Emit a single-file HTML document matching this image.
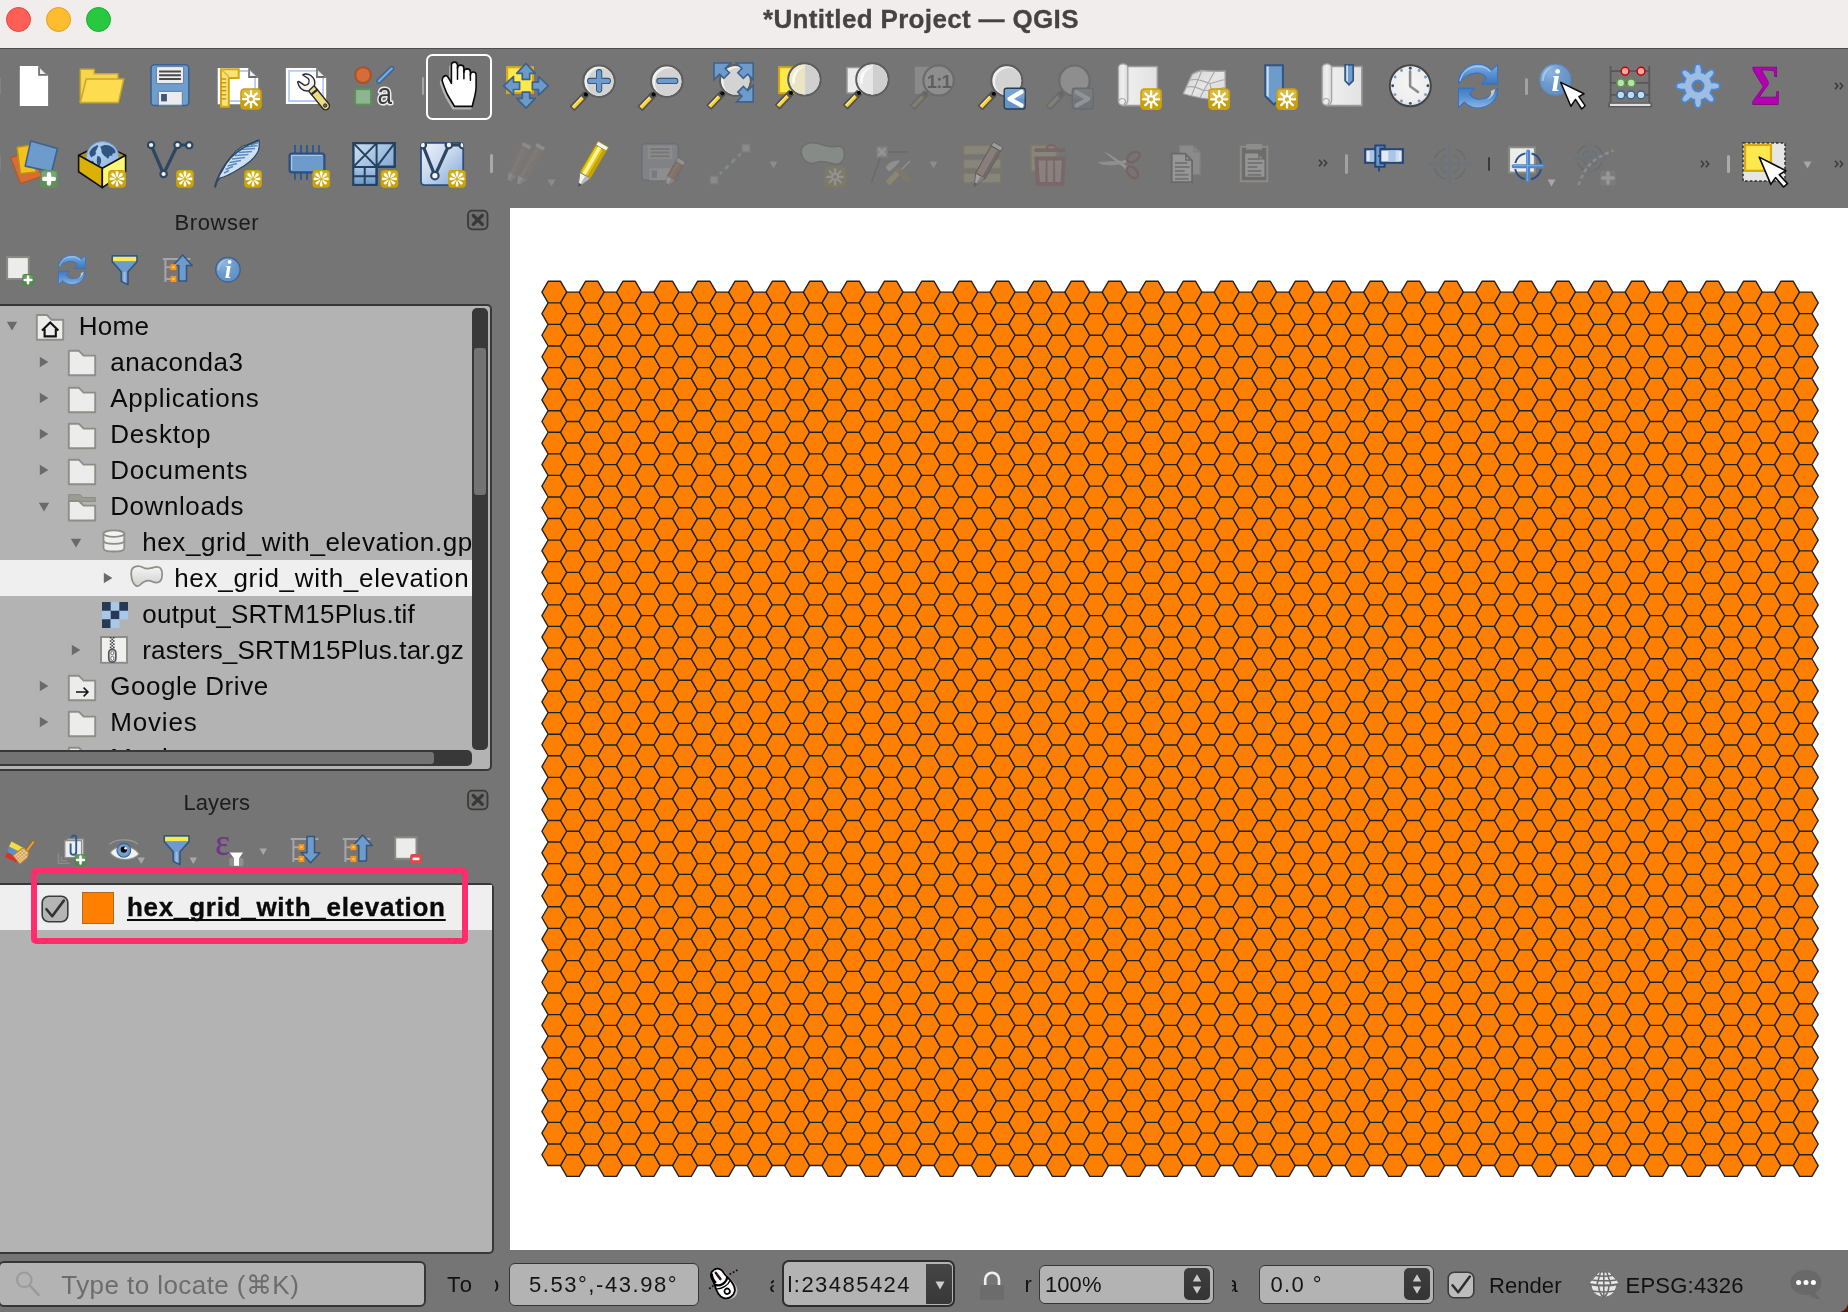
<!DOCTYPE html>
<html lang="en"><head><meta charset="utf-8"><title>*Untitled Project — QGIS</title>
<style>
html,body{margin:0;padding:0;background:#757575;}
body{width:1848px;height:1312px;overflow:hidden;font-family:"Liberation Sans",sans-serif;}
#app{position:relative;width:1848px;height:1312px;overflow:hidden;background:#757575;will-change:transform;}
#titlebar{position:absolute;left:0;top:0;width:1848px;height:48px;background:#f0edec;border-bottom:1px solid #4d4d4d;box-sizing:content-box;}
.tl{position:absolute;top:7px;width:23px;height:23px;border-radius:50%;border:1px solid;box-sizing:content-box;}
.t{position:absolute;white-space:pre;font-family:"Liberation Sans",sans-serif;}
.i{position:absolute;overflow:visible;}
.sep{position:absolute;width:3px;border-radius:2px;background:#9a9a9a;}

</style></head>
<body>
<div id="app">
<div id="titlebar">
<i class="tl" style="left:6px;background:#ff5f57;border-color:#e2463f"></i>
<i class="tl" style="left:46px;background:#febc2e;border-color:#dfa023"></i>
<i class="tl" style="left:86px;background:#28c840;border-color:#1dad2b"></i>
</div>
<span class="t" style="left:763.00px;top:5.69px;font-size:26px;line-height:26px;font-weight:700;color:#454343;letter-spacing:0.338px;-webkit-text-stroke:0.3px #454343;">*Untitled Project — QGIS</span>
<div style="position:absolute;left:0px;top:78px;width:1px;height:16px;background:#818181"></div>
<div style="position:absolute;left:0px;top:155px;width:1px;height:16px;background:#818181"></div>
<svg class="i" style="left:10px;top:62px;" width="48" height="48" viewBox="0 0 48 48"><path d="M9.800,3.900 H28.200 L38.100,13.800 V44 H9.800z" fill="#fff"/><path d="M28.200,3.900 V13.800 H38.100z" fill="#6c6c6c"/><path d="M29.900,6.400 V11.900 H35.700z" fill="#f0f0f0"/></svg>
<svg class="i" style="left:77px;top:62px;" width="48" height="48" viewBox="0 0 48 48"><path d="M3.300,40.600 V7.300 H17.200 V11.800 H41 V40.600z" fill="#f7d64c" stroke="#c7a730" stroke-width="1.500" stroke-linejoin="round"/><path d="M9.200,17 H46.800 L41.400,40.600 H3.300z" fill="#fddc50" stroke="#c7a730" stroke-width="1.500" stroke-linejoin="round"/></svg>
<svg class="i" style="left:146px;top:62px;" width="48" height="48" viewBox="0 0 48 48"><rect x="5" y="2.700" width="37.800" height="40.800" rx="3.600" fill="#6f9dcc" stroke="#3c6190" stroke-width="1.600"/><rect x="10.400" y="4.600" width="27.200" height="17" rx="1.600" fill="#ededed" stroke="#5f7fa6" stroke-width="1"/><path d="M13.100,9.400H34.900 M13.100,13.200H34.900 M13.100,17H34.900" stroke="#4a4a4a" stroke-width="2"/><rect x="12.300" y="29.400" width="24" height="13.800" rx="1" fill="#ececec" stroke="#5f7fa6" stroke-width="1"/><rect x="15.100" y="32" width="5.800" height="7.400" fill="#3c587d"/></svg>
<svg class="i" style="left:215px;top:62px;" width="48" height="48" viewBox="0 0 48 48"><path d="M2.700,5.900 H33.200 L43.200,15.900 V42.300 H2.700z" fill="#fff"/><path d="M33.200,5.900 V15.900 H43.200z" fill="#6c6c6c"/><path d="M34.900,8.400 V13.900 H40.700z" fill="#f0f0f0"/><path d="M33.200,9 H14 M40.100,15.900 V39 H14" fill="none" stroke="#b9cbf5" stroke-width="1.800"/><path d="M6,7.200 H23.700 V16 H13.800 V44.700 H6z" fill="#fbe27c" stroke="#d3a912" stroke-width="2" stroke-linejoin="miter"/><path d="M6.500,7.500 L13.800,14.600" stroke="#e0ba30" stroke-width="1.600"/><path d="M6,17h5.200 M6,20.800h5.200 M6,24.700h5.200 M6,28.600h5.200 M6,32.800h5.200 M6,36.800h5.200" stroke="#c59b10" stroke-width="1.600"/><rect x="25.2" y="26.2" width="21.6" height="21.6" rx="4.200" fill="#c6a008"/><rect x="26.8" y="27.8" width="18.4" height="9.072" rx="3" fill="#e4cf72" opacity=".55"/><path d="M36.00,29.10 L36.00,45.30 M41.73,31.47 L30.27,42.93 M44.10,37.20 L27.90,37.20 M41.73,42.93 L30.27,31.47 " stroke="#fff" stroke-width="2.300" stroke-linecap="round" fill="none"/><circle cx="36" cy="37.2" r="4.100" fill="#fff"/><circle cx="36" cy="37.2" r="2.100" fill="#d3b12c"/></svg>
<svg class="i" style="left:283px;top:62px;" width="48" height="48" viewBox="0 0 48 48"><path d="M2.900,5.900 H33.100 L43.200,15.900 V42.100 H2.900z" fill="#fff"/><path d="M33.100,5.900 V15.900 H43.200z" fill="#6c6c6c"/><path d="M34.800,8.400 V13.900 H40.700z" fill="#f0f0f0"/><path d="M33.100,8.900 H6 V39 H40.100 V15.900" fill="none" stroke="#b9cbf5" stroke-width="1.800"/><path d="M29,27.200 L42.600,43.900" stroke="#2a2a2a" stroke-width="9" stroke-linecap="round"/><path d="M29,27.200 L42.600,43.900" stroke="#eedc82" stroke-width="6.200" stroke-linecap="round"/><path d="M28.200,32.600 L34.600,27.400" stroke="#2a2a2a" stroke-width="2"/><circle cx="42.200" cy="43.500" r="1.700" fill="#6a6a6a" stroke="#2a2a2a" stroke-width="1"/><path d="M19.800,12.800 C21,11.900 25,11.400 27.800,13.500 C30.200,15.300 31.800,18 31.800,20.500 C31.800,22 31.600,23 31.100,23.800 L25.600,28.900 C22.600,29.400 20,28.400 18,26.400 C16.200,24.600 15,22.400 14.600,19.800 L15.700,19.400 L21.600,23.400 C23.400,23.400 25,22.600 25.800,21 C26.500,19.400 26.200,17.600 25.200,16.500 L20.500,13.500z" fill="#f2f3f3" stroke="#2a2a2a" stroke-width="1.400" stroke-linejoin="round"/></svg>
<svg class="i" style="left:350px;top:62px;" width="48" height="48" viewBox="0 0 48 48"><circle cx="13.050" cy="13.100" r="7.900" fill="#d46d3a" stroke="#a8522a" stroke-width="2"/><path d="M28.900,19.200 L41.700,6.500" stroke="#3f6595" stroke-width="5.400" stroke-linecap="round"/><path d="M28.900,19.200 L41.700,6.500" stroke="#7aa7da" stroke-width="2.400" stroke-linecap="round"/><rect x="5.100" y="27.100" width="15.900" height="15.500" fill="#8db592" stroke="#5d9158" stroke-width="2"/><text x="27.400" y="42" font-family="Liberation Sans,sans-serif" font-size="29" fill="#3a3a3a" stroke="#ececec" stroke-width="3.200" stroke-linejoin="round" paint-order="stroke" textLength="14.500" lengthAdjust="spacingAndGlyphs">a</text></svg>
<div style="position:absolute;left:421.7px;top:77px;width:2.6px;height:18px;background:#a6a6a6;border-radius:2px"></div>
<div style="position:absolute;left:426px;top:53.6px;width:66px;height:66.4px;box-sizing:border-box;border:2.2px solid #fdfdfd;border-radius:6.5px;background:#737373"></div>
<svg class="i" style="left:435px;top:62px;" width="48" height="48" viewBox="0 0 48 48"><path d="M16.400,21.300 V3.200 a3.050,3.050 0 0 1 6.100,0 V6.350 a3.200,3.200 0 0 1 6.400,0 V10.150 a3.250,3.250 0 0 1 6.500,0 V12.850 a2.850,2.850 0 0 1 5.700,0 V24.400 C41.100,32 38.500,38 37.300,44.400 H19.500 C17,40 15,37 13,33.500 C10.500,29 9,24 7.400,19.600 C6.400,16.800 8.400,13.600 11,13.600 C13,13.600 14.600,18 16.400,21.300z" transform="translate(-1.600,2.300)" fill="#b4b4b4" stroke="#b4b4b4" stroke-width="1.400"/><path d="M16.400,21.300 V3.200 a3.050,3.050 0 0 1 6.100,0 V6.350 a3.200,3.200 0 0 1 6.400,0 V10.150 a3.250,3.250 0 0 1 6.500,0 V12.850 a2.850,2.850 0 0 1 5.700,0 V24.400 C41.100,32 38.500,38 37.300,44.400 H19.500 C17,40 15,37 13,33.500 C10.500,29 9,24 7.400,19.600 C6.400,16.800 8.400,13.600 11,13.600 C13,13.600 14.600,18 16.400,21.300z" fill="#fff" stroke="#0a0a0a" stroke-width="1.600" stroke-linejoin="round"/><path d="M22.500,5.400 V17.200 M28.900,8.500 V16.800 M35.400,12.200 V18.300" stroke="#0a0a0a" stroke-width="1.500" stroke-linecap="round"/></svg>
<svg class="i" style="left:502px;top:62px;" width="48" height="48" viewBox="0 0 48 48"><rect x="5.100" y="5.200" width="25.800" height="25.600" fill="#fde84e" stroke="#d9a90f" stroke-width="2.200"/><path transform="rotate(0 24 23.800)" d="M24,1.400 L33.300,11.300 H27.700 V17.400 H20.300 V11.300 H14.700z" fill="#6d9bc9" stroke="#3f628a" stroke-width="1.700" stroke-linejoin="round"/><path transform="rotate(90 24 23.800)" d="M24,1.400 L33.300,11.300 H27.700 V17.400 H20.300 V11.300 H14.700z" fill="#6d9bc9" stroke="#3f628a" stroke-width="1.700" stroke-linejoin="round"/><path transform="rotate(180 24 23.800)" d="M24,1.400 L33.300,11.300 H27.700 V17.400 H20.300 V11.300 H14.700z" fill="#6d9bc9" stroke="#3f628a" stroke-width="1.700" stroke-linejoin="round"/><path transform="rotate(270 24 23.800)" d="M24,1.400 L33.300,11.300 H27.700 V17.400 H20.300 V11.300 H14.700z" fill="#6d9bc9" stroke="#3f628a" stroke-width="1.700" stroke-linejoin="round"/></svg>
<svg class="i" style="left:571px;top:62px;" width="48" height="48" viewBox="0 0 48 48"><path d="M15.52,31.68 L1.02,46.78" stroke="#525252" stroke-width="7" stroke-linecap="butt"/><path d="M11.62,35.68 L2.12,45.68" stroke="#fdd22e" stroke-width="3.500" stroke-linecap="butt"/><path d="M10.82,34.88 L1.32,44.88" stroke="#ffeb99" stroke-width="1.100" stroke-linecap="butt"/><circle cx="14.92" cy="32.38" r="2.100" fill="#050505"/><circle cx="28" cy="19.2" r="15.7" fill="#d3d3d3" stroke="#5e5e5e" stroke-width="2.200"/><clipPath id="gzic"><circle cx="28" cy="19.2" r="14.6"/></clipPath><g clip-path="url(#gzic)"><circle cx="28" cy="19.2" r="14.7" fill="#f0f0f0"/><circle cx="30.5" cy="20.7" r="14.5" fill="#d3d3d3"/></g><path d="M19.200,18.950 H36.800 M28.100,10.200 V27.600" stroke="#27466e" stroke-width="6.200" stroke-linecap="round"/><path d="M19.200,18.950 H36.800 M28.100,10.200 V27.600" stroke="#6d9bcb" stroke-width="4.600" stroke-linecap="round"/></svg>
<svg class="i" style="left:639px;top:62px;" width="48" height="48" viewBox="0 0 48 48"><path d="M15.32,31.68 L0.82,46.78" stroke="#525252" stroke-width="7" stroke-linecap="butt"/><path d="M11.42,35.68 L1.92,45.68" stroke="#fdd22e" stroke-width="3.500" stroke-linecap="butt"/><path d="M10.62,34.88 L1.12,44.88" stroke="#ffeb99" stroke-width="1.100" stroke-linecap="butt"/><circle cx="14.72" cy="32.38" r="2.100" fill="#050505"/><circle cx="27.8" cy="19.2" r="15.7" fill="#d3d3d3" stroke="#5e5e5e" stroke-width="2.200"/><clipPath id="gzoc"><circle cx="27.8" cy="19.2" r="14.6"/></clipPath><g clip-path="url(#gzoc)"><circle cx="27.8" cy="19.2" r="14.7" fill="#f0f0f0"/><circle cx="30.3" cy="20.7" r="14.5" fill="#d3d3d3"/></g><path d="M20.400,18.950 H36.200" stroke="#27466e" stroke-width="6.200" stroke-linecap="round"/><path d="M20.400,18.950 H36.200" stroke="#6d9bcb" stroke-width="4.600" stroke-linecap="round"/></svg>
<svg class="i" style="left:707px;top:62px;" width="48" height="48" viewBox="0 0 48 48"><path d="M16.11,30.59 L1.61,45.69" stroke="#525252" stroke-width="7" stroke-linecap="butt"/><path d="M12.21,34.59 L2.71,44.59" stroke="#fdd22e" stroke-width="3.500" stroke-linecap="butt"/><path d="M11.41,33.79 L1.91,43.79" stroke="#ffeb99" stroke-width="1.100" stroke-linecap="butt"/><circle cx="15.51" cy="31.29" r="2.100" fill="#050505"/><circle cx="28.3" cy="18.4" r="15.3" fill="#d3d3d3" stroke="#5e5e5e" stroke-width="2.200"/><clipPath id="gzfc"><circle cx="28.3" cy="18.4" r="14.2"/></clipPath><g clip-path="url(#gzfc)"><circle cx="28.3" cy="18.4" r="14.3" fill="#f0f0f0"/><circle cx="30.8" cy="19.9" r="14.1" fill="#d3d3d3"/></g><path transform="translate(7,1) rotate(0)" d="M0,0 H16.800 L11.200,5.600 L15.400,9.800 L9.800,15.400 L5.600,11.200 L0,16.800z" fill="#6d9bcb" stroke="#3f628a" stroke-width="1.600" stroke-linejoin="miter"/><path transform="translate(46.2,1) rotate(90)" d="M0,0 H16.800 L11.200,5.600 L15.400,9.800 L9.800,15.400 L5.600,11.200 L0,16.800z" fill="#6d9bcb" stroke="#3f628a" stroke-width="1.600" stroke-linejoin="miter"/><path transform="translate(46.2,39.9) rotate(180)" d="M0,0 H16.800 L11.200,5.600 L15.400,9.800 L9.800,15.400 L5.600,11.200 L0,16.800z" fill="#6d9bcb" stroke="#3f628a" stroke-width="1.600" stroke-linejoin="miter"/></svg>
<svg class="i" style="left:775px;top:62px;" width="48" height="48" viewBox="0 0 48 48"><rect x="4.100" y="5.250" width="25" height="25.900" fill="#fde84e" stroke="#d4a90a" stroke-width="2"/><path d="M16.64,30.16 L2.14,45.26" stroke="#525252" stroke-width="7" stroke-linecap="butt"/><path d="M12.74,34.16 L3.24,44.16" stroke="#fdd22e" stroke-width="3.500" stroke-linecap="butt"/><path d="M11.94,33.36 L2.44,43.36" stroke="#ffeb99" stroke-width="1.100" stroke-linecap="butt"/><circle cx="16.04" cy="30.86" r="2.100" fill="#050505"/><circle cx="29.4" cy="17.4" r="16.1" fill="#d3d3d3" stroke="#5e5e5e" stroke-width="2.200"/><clipPath id="gzsc"><circle cx="29.4" cy="17.4" r="15"/></clipPath><g clip-path="url(#gzsc)"><circle cx="29.4" cy="17.4" r="15.1" fill="#f0f0f0"/><circle cx="31.9" cy="18.9" r="14.9" fill="#d3d3d3"/></g><clipPath id="czs"><circle cx="29.400" cy="17.400" r="15"/></clipPath><g clip-path="url(#czs)"><rect x="10" y="0" width="20.300" height="36" fill="#efe9bf" opacity=".8"/><rect x="30.300" y="0" width="20" height="36" fill="#cfcfcf" opacity=".85"/></g><path d="M17.600,22 C15.600,13 21,6 29.500,4.800 C23,7.500 19.500,13 19.800,21.500z" fill="#fff" opacity=".85"/></svg>
<svg class="i" style="left:843px;top:62px;" width="48" height="48" viewBox="0 0 48 48"><rect x="4" y="5.550" width="25" height="25.450" fill="#ececec" stroke="#9a9a94" stroke-width="1.500"/><path d="M16.64,30.16 L2.14,45.26" stroke="#525252" stroke-width="7" stroke-linecap="butt"/><path d="M12.74,34.16 L3.24,44.16" stroke="#fdd22e" stroke-width="3.500" stroke-linecap="butt"/><path d="M11.94,33.36 L2.44,43.36" stroke="#ffeb99" stroke-width="1.100" stroke-linecap="butt"/><circle cx="16.04" cy="30.86" r="2.100" fill="#050505"/><circle cx="29.4" cy="17.4" r="16.1" fill="#d3d3d3" stroke="#5e5e5e" stroke-width="2.200"/><clipPath id="gzlc"><circle cx="29.4" cy="17.4" r="15"/></clipPath><g clip-path="url(#gzlc)"><circle cx="29.4" cy="17.4" r="15.1" fill="#f0f0f0"/><circle cx="31.9" cy="18.9" r="14.9" fill="#d3d3d3"/></g><clipPath id="czl"><circle cx="29.400" cy="17.400" r="15"/></clipPath><g clip-path="url(#czl)"><rect x="10" y="0" width="20" height="36" fill="#ebebeb" opacity=".8"/><rect x="30" y="0" width="20" height="36" fill="#cecece" opacity=".85"/></g><path d="M17.600,22 C15.600,13 21,6 29.500,4.800 C23,7.500 19.500,13 19.800,21.500z" fill="#fff" opacity=".85"/></svg>
<svg class="i" style="left:911px;top:62px;" width="48" height="48" viewBox="0 0 48 48"><rect x="3.800" y="4.800" width="22" height="27" fill="#8a8a8a"/><path d="M15.48,30.62 L0.98,45.72" stroke="#6b6b6b" stroke-width="7" stroke-linecap="butt"/><path d="M11.58,34.62 L2.08,44.62" stroke="#827f74" stroke-width="3.500" stroke-linecap="butt"/><circle cx="14.88" cy="31.32" r="2.100" fill="#666"/><circle cx="27.6" cy="18.5" r="15.2" fill="#8e8e8e" stroke="#6c6c6c" stroke-width="2.200"/><text x="27.850" y="25.500" text-anchor="middle" font-family="Liberation Sans,sans-serif" font-weight="700" font-size="18.500" letter-spacing="-0.800" fill="#5f5f5f">1:1</text></svg>
<svg class="i" style="left:979px;top:62px;" width="48" height="48" viewBox="0 0 48 48"><path d="M15.46,31.04 L0.96,46.14" stroke="#525252" stroke-width="7" stroke-linecap="butt"/><path d="M11.56,35.04 L2.06,45.04" stroke="#fdd22e" stroke-width="3.500" stroke-linecap="butt"/><path d="M10.76,34.24 L1.26,44.24" stroke="#ffeb99" stroke-width="1.100" stroke-linecap="butt"/><circle cx="14.86" cy="31.74" r="2.100" fill="#050505"/><circle cx="27.8" cy="18.7" r="15.5" fill="#d3d3d3" stroke="#5e5e5e" stroke-width="2.200"/><clipPath id="gzpc"><circle cx="27.8" cy="18.7" r="14.4"/></clipPath><g clip-path="url(#gzpc)"><circle cx="27.8" cy="18.7" r="14.5" fill="#f0f0f0"/><circle cx="30.3" cy="20.2" r="14.3" fill="#d3d3d3"/></g><rect x="25.200" y="26.200" width="21" height="20.800" rx="2.600" fill="#6493c5" stroke="#2d3d50" stroke-width="1.400"/><rect x="26" y="27" width="19.400" height="9.600" rx="1.500" fill="#77a3d3"/><path d="M42.300,29.900 L30.600,36.900 L42.300,43.400" fill="none" stroke="#fff" stroke-width="4.400" stroke-linecap="round" stroke-linejoin="round"/></svg>
<svg class="i" style="left:1047px;top:62px;" width="48" height="48" viewBox="0 0 48 48"><path d="M15.38,30.82 L0.88,45.92" stroke="#6b6b6b" stroke-width="7" stroke-linecap="butt"/><path d="M11.48,34.82 L1.98,44.82" stroke="#827f74" stroke-width="3.500" stroke-linecap="butt"/><circle cx="14.78" cy="31.52" r="2.100" fill="#666"/><circle cx="27.5" cy="18.7" r="15.2" fill="#8e8e8e" stroke="#6c6c6c" stroke-width="2.200"/><rect x="25.300" y="26.200" width="20.800" height="20.800" rx="2.600" fill="#6f767a" stroke="#676c70" stroke-width="1.400"/><rect x="26" y="27" width="19.400" height="9.600" rx="1.500" fill="#767c80"/><path d="M29.700,30.200 L41.300,36.900 L29.700,43.400" fill="none" stroke="#939393" stroke-width="4.200" stroke-linecap="round" stroke-linejoin="round"/></svg>
<svg class="i" style="left:1115px;top:62px;" width="48" height="48" viewBox="0 0 48 48"><defs><linearGradient id="gsc1" x1="0" x2="1"><stop offset="0" stop-color="#cfcfcf"/><stop offset=".22" stop-color="#ededed"/><stop offset="1" stop-color="#e2e2e2"/></linearGradient><linearGradient id="gsc1r" x1="0" x2="1"><stop offset="0" stop-color="#dedede"/><stop offset=".5" stop-color="#f0f0f0"/><stop offset="1" stop-color="#d6d6d6"/></linearGradient></defs><path d="M12.2,4.5 H42.4 V43.6 H7.4 z" fill="url(#gsc1)" stroke="#9a9a9a" stroke-width="1.600" stroke-linejoin="round"/><path d="M3.4,5.5 a4.7,3.600 0 0 1 9.4,0 V37.6 c0,3.500 -2,5.600 -5,5.600 c-2.800,0 -4.400,-1.800 -4.400,-4.200z" fill="url(#gsc1r)" stroke="#a6a6a6" stroke-width="1.300"/><path d="M3.8,38.6 c1.200,-2.600 4.800,-2.800 6.400,-0.400 c0.800,1.600 0,3.200 -1.400,3.600" fill="none" stroke="#a6a6a6" stroke-width="1.200"/><rect x="25.2" y="26.2" width="21.8" height="21.8" rx="4.200" fill="#c6a008"/><rect x="26.8" y="27.8" width="18.6" height="9.156" rx="3" fill="#e4cf72" opacity=".55"/><path d="M36.10,29.13 L36.10,45.48 M41.88,31.52 L30.32,43.08 M44.28,37.30 L27.93,37.30 M41.88,43.08 L30.32,31.52 " stroke="#fff" stroke-width="2.300" stroke-linecap="round" fill="none"/><circle cx="36.1" cy="37.3" r="4.100" fill="#fff"/><circle cx="36.1" cy="37.3" r="2.100" fill="#d3b12c"/></svg>
<svg class="i" style="left:1183px;top:62px;" width="48" height="48" viewBox="0 0 48 48"><defs><linearGradient id="g3d" x1="0" y1="0" x2="1" y2="1"><stop offset="0" stop-color="#cfcfcf"/><stop offset=".5" stop-color="#e6e6e6"/><stop offset="1" stop-color="#d6d6d6"/></linearGradient></defs><path d="M9,12.400 C12,10.500 15.500,9.200 18.700,8.500 C26,9.500 34,9.400 42,9 L42.500,36 L25,36.900 C16,36 8,34 0.200,31.750z" fill="url(#g3d)" stroke="#a4a4a4" stroke-width="1.300" stroke-linejoin="round"/><path d="M6,18.500 C14,15.500 20,19.500 27,21.500 C32,20.500 37,18.500 42.200,17.500 M3,25 C10,23.500 15,25.500 20.500,28.500 C28,29 35,27 42.300,25.500 M18.700,8.500 C17,14 13,22 8.500,33.500 M31.500,9.300 C29,15 24,22 17,35.500 M27,21.500 C28,27 29,32 30,36.500" fill="none" stroke="#a9a9a9" stroke-width="1.100"/><rect x="25.2" y="26.2" width="21.8" height="21.8" rx="4.200" fill="#c6a008"/><rect x="26.8" y="27.8" width="18.6" height="9.156" rx="3" fill="#e4cf72" opacity=".55"/><path d="M36.10,29.13 L36.10,45.48 M41.88,31.52 L30.32,43.08 M44.28,37.30 L27.93,37.30 M41.88,43.08 L30.32,31.52 " stroke="#fff" stroke-width="2.300" stroke-linecap="round" fill="none"/><circle cx="36.1" cy="37.3" r="4.100" fill="#fff"/><circle cx="36.1" cy="37.3" r="2.100" fill="#d3b12c"/></svg>
<svg class="i" style="left:1251px;top:62px;" width="48" height="48" viewBox="0 0 48 48"><path d="M14.200,3.200 H31.900 V34 L22.900,42.600 L14.200,34z" fill="#6d9bcb" stroke="#34557e" stroke-width="2" stroke-linejoin="miter"/><path d="M15.600,4.400 H17.700 V35.400 L15.600,33.400z" fill="#cfe0f5"/><rect x="25.1" y="26.2" width="21.8" height="21.8" rx="4.200" fill="#c6a008"/><rect x="26.7" y="27.8" width="18.6" height="9.156" rx="3" fill="#e4cf72" opacity=".55"/><path d="M36.00,29.13 L36.00,45.48 M41.78,31.52 L30.22,43.08 M44.17,37.30 L27.82,37.30 M41.78,43.08 L30.22,31.52 " stroke="#fff" stroke-width="2.300" stroke-linecap="round" fill="none"/><circle cx="36" cy="37.3" r="4.100" fill="#fff"/><circle cx="36" cy="37.3" r="2.100" fill="#d3b12c"/></svg>
<svg class="i" style="left:1318px;top:62px;" width="48" height="48" viewBox="0 0 48 48"><defs><linearGradient id="gsc2" x1="0" x2="1"><stop offset="0" stop-color="#cfcfcf"/><stop offset=".22" stop-color="#ededed"/><stop offset="1" stop-color="#e2e2e2"/></linearGradient><linearGradient id="gsc2r" x1="0" x2="1"><stop offset="0" stop-color="#dedede"/><stop offset=".5" stop-color="#f0f0f0"/><stop offset="1" stop-color="#d6d6d6"/></linearGradient></defs><path d="M13,4.5 H43.9 V43.6 H8.2 z" fill="url(#gsc2)" stroke="#9a9a9a" stroke-width="1.600" stroke-linejoin="round"/><path d="M4.2,5.5 a4.7,3.600 0 0 1 9.4,0 V37.6 c0,3.500 -2,5.600 -5,5.600 c-2.800,0 -4.400,-1.800 -4.400,-4.200z" fill="url(#gsc2r)" stroke="#a6a6a6" stroke-width="1.300"/><path d="M4.6,38.6 c1.200,-2.600 4.800,-2.800 6.400,-0.400 c0.800,1.600 0,3.200 -1.400,3.600" fill="none" stroke="#a6a6a6" stroke-width="1.200"/><path d="M27.100,2.800 H35.200 V18.700 L31,22.900 L27.100,18.700z" fill="#6d9bcb" stroke="#34557e" stroke-width="1.700" stroke-linejoin="miter"/><path d="M28.300,3.600 H30 V20.200 L28.300,18.400z" fill="#cfe0f5"/></svg>
<svg class="i" style="left:1386px;top:62px;" width="48" height="48" viewBox="0 0 48 48"><defs><radialGradient id="gck" cx="50%" cy="45%" r="55%"><stop offset="0" stop-color="#f6f6f6"/><stop offset=".8" stop-color="#eeeeee"/><stop offset="1" stop-color="#dcdcdc"/></radialGradient></defs><circle cx="24.300" cy="23.800" r="20.500" fill="url(#gck)" stroke="#454545" stroke-width="2"/><circle cx="24.30" cy="6.20" r="1.45" fill="#2e4f7c"/><circle cx="33.10" cy="8.56" r="1.45" fill="#6d9bd1"/><circle cx="39.54" cy="15.00" r="1.45" fill="#6d9bd1"/><circle cx="41.90" cy="23.80" r="1.45" fill="#2e4f7c"/><circle cx="39.54" cy="32.60" r="1.45" fill="#6d9bd1"/><circle cx="33.10" cy="39.04" r="1.45" fill="#6d9bd1"/><circle cx="24.30" cy="41.40" r="1.45" fill="#2e4f7c"/><circle cx="15.50" cy="39.04" r="1.45" fill="#6d9bd1"/><circle cx="9.06" cy="32.60" r="1.45" fill="#6d9bd1"/><circle cx="6.70" cy="23.80" r="1.45" fill="#2e4f7c"/><circle cx="9.06" cy="15.00" r="1.45" fill="#6d9bd1"/><circle cx="15.50" cy="8.56" r="1.45" fill="#6d9bd1"/><path d="M24.100,9.400 V24.200 L32,30" fill="none" stroke="#8a8d88" stroke-width="2.600" stroke-linecap="round" stroke-linejoin="round"/></svg>
<svg class="i" style="left:1454px;top:62px;" width="48" height="48" viewBox="0 0 48 48"><defs><linearGradient id="grf1" x1="0" y1="0" x2="0" y2="1"><stop offset="0" stop-color="#7fb0e6"/><stop offset=".45" stop-color="#5b93d3"/><stop offset="1" stop-color="#3c77be"/></linearGradient><linearGradient id="grf1b" x1="0" y1="1" x2="0" y2="0"><stop offset="0" stop-color="#3f7ac2"/><stop offset=".5" stop-color="#5b93d3"/><stop offset="1" stop-color="#8ab6e8"/></linearGradient></defs><path d="M4.400,22 C3.600,10.500 13,2.300 24,2.200 C29.500,2.200 34.200,4.400 37.600,8.200 L43.600,2.800 V22.100 H27.600 L32.400,16 C30,12.800 27,11.200 23.600,11 C17,10.700 10,14.200 4.400,22z" fill="url(#grf1)" stroke="#3a72b8" stroke-width="1.100" stroke-linejoin="round"/><path d="M6,19 C8,10 15,4.600 24,4.400 C29,4.400 33,6 36.400,9.600" fill="none" stroke="#b7d3f2" stroke-width="1.200" opacity=".8"/><path transform="rotate(180 24 24.100)" d="M4.400,22 C3.600,10.500 13,2.300 24,2.200 C29.500,2.200 34.200,4.400 37.600,8.200 L43.600,2.800 V22.100 H27.600 L32.400,16 C30,12.800 27,11.200 23.600,11 C17,10.700 10,14.200 4.400,22z" fill="url(#grf1b)" stroke="#3a72b8" stroke-width="1.100" stroke-linejoin="round"/><path d="M36.800,29 C38,31.500 36,35.500 32.500,37.500 C37,36.500 41,32 41,27z" fill="#d9dde2" opacity=".8"/></svg>
<div style="position:absolute;left:1525.1px;top:77.5px;width:3px;height:17px;background:#a2a2a2;border-radius:2px"></div>
<svg class="i" style="left:1536px;top:62px;" width="48" height="48" viewBox="0 0 48 48"><defs><radialGradient id="gid" cx="35%" cy="25%" r="80%"><stop offset="0" stop-color="#8fb5e0"/><stop offset=".5" stop-color="#6d9bcb"/><stop offset="1" stop-color="#5f8ec4"/></radialGradient></defs><circle cx="19.300" cy="17.700" r="15.700" fill="url(#gid)" stroke="#5a88bd" stroke-width="1"/><path d="M5.800,19 C5.200,11 11,4.600 19,4.200 C12.500,6 8.200,11.500 7.800,19z" fill="#fff" opacity=".35"/><text x="19.800" y="28.600" text-anchor="middle" font-family="Liberation Serif,serif" font-style="italic" font-weight="700" font-size="31" fill="#fff">i</text><path d="M24.700,20.400 L34.900,44.250 L39.500,37.400 L45.700,47 L49.100,43.700 L42.900,34.600 L48,31.750z" fill="#fff" stroke="#0a0a0a" stroke-width="1.500" stroke-linejoin="round"/></svg>
<svg class="i" style="left:1606px;top:62px;" width="48" height="48" viewBox="0 0 48 48"><path d="M4.600,4 V42 M43.300,4 V42 M4.600,9.200 H43.300 M4.600,20.900 H43.300 M4.600,32.900 H43.300" stroke="#585858" stroke-width="1.800" fill="none"/><rect x="2.300" y="40.600" width="43.700" height="4.800" fill="#5a5a5a"/><rect x="4" y="41.800" width="40.400" height="2.200" fill="#e0e0e0"/><circle cx="19.1" cy="9.2" r="3.900" fill="#f4a6a6" stroke="#c40000" stroke-width="1.500"/><circle cx="35" cy="9.2" r="3.900" fill="#f4a6a6" stroke="#c40000" stroke-width="1.500"/><circle cx="14.8" cy="20.9" r="3.900" fill="#b9e3a8" stroke="#5c9a4c" stroke-width="1.500"/><circle cx="25.2" cy="20.9" r="3.900" fill="#b9e3a8" stroke="#5c9a4c" stroke-width="1.500"/><circle cx="14.8" cy="32.9" r="3.900" fill="#bfdcf3" stroke="#3b6488" stroke-width="1.500"/><circle cx="24.9" cy="32.9" r="3.900" fill="#bfdcf3" stroke="#3b6488" stroke-width="1.500"/><circle cx="35" cy="32.9" r="3.900" fill="#bfdcf3" stroke="#3b6488" stroke-width="1.500"/></svg>
<svg class="i" style="left:1674px;top:62px;" width="48" height="48" viewBox="0 0 48 48"><path transform="rotate(0 24 24)" d="M20,13.500 C20.200,9 20.600,5.400 21.400,3.600 C22.200,1.700 25.800,1.700 26.600,3.600 C27.400,5.400 27.800,9 28,13.500z" fill="#9dbde3" stroke="#4a86d0" stroke-width="1.800" stroke-linejoin="round"/><path transform="rotate(45 24 24)" d="M20,13.500 C20.200,9 20.600,5.400 21.400,3.600 C22.200,1.700 25.800,1.700 26.600,3.600 C27.400,5.400 27.800,9 28,13.500z" fill="#9dbde3" stroke="#4a86d0" stroke-width="1.800" stroke-linejoin="round"/><path transform="rotate(90 24 24)" d="M20,13.500 C20.200,9 20.600,5.400 21.400,3.600 C22.200,1.700 25.800,1.700 26.600,3.600 C27.400,5.400 27.800,9 28,13.500z" fill="#9dbde3" stroke="#4a86d0" stroke-width="1.800" stroke-linejoin="round"/><path transform="rotate(135 24 24)" d="M20,13.500 C20.200,9 20.600,5.400 21.400,3.600 C22.200,1.700 25.800,1.700 26.600,3.600 C27.400,5.400 27.800,9 28,13.500z" fill="#9dbde3" stroke="#4a86d0" stroke-width="1.800" stroke-linejoin="round"/><path transform="rotate(180 24 24)" d="M20,13.500 C20.200,9 20.600,5.400 21.400,3.600 C22.200,1.700 25.800,1.700 26.600,3.600 C27.400,5.400 27.800,9 28,13.500z" fill="#9dbde3" stroke="#4a86d0" stroke-width="1.800" stroke-linejoin="round"/><path transform="rotate(225 24 24)" d="M20,13.500 C20.200,9 20.600,5.400 21.400,3.600 C22.200,1.700 25.800,1.700 26.600,3.600 C27.400,5.400 27.800,9 28,13.500z" fill="#9dbde3" stroke="#4a86d0" stroke-width="1.800" stroke-linejoin="round"/><path transform="rotate(270 24 24)" d="M20,13.500 C20.200,9 20.600,5.400 21.400,3.600 C22.200,1.700 25.800,1.700 26.600,3.600 C27.400,5.400 27.800,9 28,13.500z" fill="#9dbde3" stroke="#4a86d0" stroke-width="1.800" stroke-linejoin="round"/><path transform="rotate(315 24 24)" d="M20,13.500 C20.200,9 20.600,5.400 21.400,3.600 C22.200,1.700 25.800,1.700 26.600,3.600 C27.400,5.400 27.800,9 28,13.500z" fill="#9dbde3" stroke="#4a86d0" stroke-width="1.800" stroke-linejoin="round"/><circle cx="24" cy="24" r="14.200" fill="#9dbde3" stroke="#4a86d0" stroke-width="1.800"/><path transform="rotate(0 24 24)" d="M21,15 C21.200,9.500 21.600,6 22.200,4.600 C22.700,3.500 25.300,3.500 25.800,4.600 C26.400,6 26.800,9.500 27,15z" fill="#9dbde3"/><path transform="rotate(45 24 24)" d="M21,15 C21.200,9.500 21.600,6 22.200,4.600 C22.700,3.500 25.300,3.500 25.800,4.600 C26.400,6 26.800,9.500 27,15z" fill="#9dbde3"/><path transform="rotate(90 24 24)" d="M21,15 C21.200,9.500 21.600,6 22.200,4.600 C22.700,3.500 25.300,3.500 25.800,4.600 C26.400,6 26.800,9.500 27,15z" fill="#9dbde3"/><path transform="rotate(135 24 24)" d="M21,15 C21.200,9.500 21.600,6 22.200,4.600 C22.700,3.500 25.300,3.500 25.800,4.600 C26.400,6 26.800,9.500 27,15z" fill="#9dbde3"/><path transform="rotate(180 24 24)" d="M21,15 C21.200,9.500 21.600,6 22.200,4.600 C22.700,3.500 25.300,3.500 25.800,4.600 C26.400,6 26.800,9.500 27,15z" fill="#9dbde3"/><path transform="rotate(225 24 24)" d="M21,15 C21.200,9.500 21.600,6 22.200,4.600 C22.700,3.500 25.300,3.500 25.800,4.600 C26.400,6 26.800,9.500 27,15z" fill="#9dbde3"/><path transform="rotate(270 24 24)" d="M21,15 C21.200,9.500 21.600,6 22.200,4.600 C22.700,3.500 25.300,3.500 25.800,4.600 C26.400,6 26.800,9.500 27,15z" fill="#9dbde3"/><path transform="rotate(315 24 24)" d="M21,15 C21.200,9.500 21.600,6 22.200,4.600 C22.700,3.500 25.300,3.500 25.800,4.600 C26.400,6 26.800,9.500 27,15z" fill="#9dbde3"/><circle cx="24" cy="24" r="5.400" fill="#757575" stroke="#4a86d0" stroke-width="2.200"/></svg>
<svg class="i" style="left:1741px;top:62px;" width="48" height="48" viewBox="0 0 48 48"><text x="24.900" y="42.700" text-anchor="middle" font-family="Liberation Serif,serif" font-weight="700" font-size="56.500" fill="#b300b3" stroke="#7d007d" stroke-width="0.700" textLength="29.500" lengthAdjust="spacingAndGlyphs">Σ</text></svg>
<svg class="i" style="left:1833.5px;top:80.5px;" width="10" height="10" viewBox="0 0 10 10"><path d="M1,1.700 L3.900,5 L1,8.300 M5.800,1.700 L8.700,5 L5.800,8.300" fill="none" stroke="#3a3a3a" stroke-width="1.500"/></svg>
<svg class="i" style="left:10px;top:139px;" width="48" height="48" viewBox="0 0 48 48"><path d="M0.500,18.800 L20,12 L32,37.300 L10.500,44.700z" fill="#d96c36" stroke="#b05a2a" stroke-width="1.300" stroke-linejoin="round"/><path d="M7,8.300 L21,6 L26,33 L10.500,34.600z" fill="#f2c11e" stroke="#b8931a" stroke-width="1.400" stroke-linejoin="round"/><path d="M20.700,2.100 L47.400,9.500 L41.700,32.750 L15.200,27.100z" fill="#6d9bcb" stroke="#3d6290" stroke-width="1.600" stroke-linejoin="round"/><rect x="30.1" y="31" width="17.8" height="17.8" rx="3.800" fill="#5d9158"/><rect x="31.4" y="32.3" width="15.2" height="7.6" rx="2.800" fill="#86ae82" opacity=".7"/><path d="M34.2,39.9 H43.8 M39,35.3 V44.5" stroke="#fff" stroke-width="4.400" stroke-linecap="round"/></svg>
<svg class="i" style="left:77px;top:139px;" width="48" height="48" viewBox="0 0 48 48"><defs><radialGradient id="ggl" cx="40%" cy="30%" r="75%"><stop offset="0" stop-color="#b4d0ee"/><stop offset="1" stop-color="#8fb4df"/></radialGradient><clipPath id="cgp"><path d="M0,0 H50 V16.300 L25.300,29.300 L1.600,16.300 H0z"/></clipPath></defs><path d="M1.600,16.300 L25.300,5 L48.600,16.300 L25.300,29.300z" fill="#b8930a" stroke="#111" stroke-width="1.500" stroke-linejoin="round"/><g clip-path="url(#cgp)"><circle cx="25.550" cy="18.850" r="16.400" fill="url(#ggl)" stroke="#6d9bd1" stroke-width="1"/><path d="M12.500,13 C14,9.500 17,7.500 19.500,6.500 C21,6 22,7 21,8 C19.500,9 20.500,10.500 19,11.500 C18,12.500 19.500,14 18.500,15.500 C17.500,17.500 15.500,16.500 14.500,18.500 C13.500,17 12,15.500 12.500,13z M23.500,7.500 C26,6 29.500,5.500 32,6.500 C34.500,7 36.500,9 38,11 C39,13 38.500,14.500 37,14.500 C36,13.500 35,15 35.500,16.500 C34.500,17.500 33.500,16 32.500,17 C32,19 31,20.500 30,19 C29,17.500 27.500,17.500 26.500,16 C25.500,14.500 24,13.500 24.500,11.500 C25,10 23,9 23.500,7.500z M20.500,17 C22,16.500 23.500,18 24,20 C24.500,22.500 23.500,25 22.500,27 L20.500,25.500 C19.500,23 19.500,19.500 20.500,17z M14.500,22 C15.500,21.500 16.500,22.500 17,24 L16,24.500 C15,24 14.500,23 14.500,22z" fill="#2f5580"/></g><path d="M1.600,16.300 L25.300,29.300 V48.700 L1.600,32.750z" fill="#dcb005" stroke="#111" stroke-width="1.600" stroke-linejoin="round"/><path d="M25.300,29.300 L48.600,16.300 V32.750 L25.300,48.700z" fill="#fdf873" stroke="#111" stroke-width="1.600" stroke-linejoin="round"/><rect x="31.2" y="31" width="17.7" height="17.7" rx="3.600" fill="#c9a20a"/><rect x="32.4" y="32.2" width="15.3" height="7.965" rx="2.600" fill="#dcc04c" opacity=".45"/><path transform="translate(40.05,39.85) rotate(0)" d="M0,-0.800 C0.600,-2.400 1.400,-4.400 1.400,-6.28 C1.400,-7.98 -1.400,-7.98 -1.400,-6.28 C-1.400,-4.400 -0.600,-2.400 0,-0.800z" fill="#fffdf0"/><path transform="translate(40.05,39.85) rotate(45)" d="M0,-0.800 C0.600,-2.400 1.400,-4.400 1.400,-6.28 C1.400,-7.98 -1.400,-7.98 -1.400,-6.28 C-1.400,-4.400 -0.600,-2.400 0,-0.800z" fill="#fffdf0"/><path transform="translate(40.05,39.85) rotate(90)" d="M0,-0.800 C0.600,-2.400 1.400,-4.400 1.400,-6.28 C1.400,-7.98 -1.400,-7.98 -1.400,-6.28 C-1.400,-4.400 -0.600,-2.400 0,-0.800z" fill="#fffdf0"/><path transform="translate(40.05,39.85) rotate(135)" d="M0,-0.800 C0.600,-2.400 1.400,-4.400 1.400,-6.28 C1.400,-7.98 -1.400,-7.98 -1.400,-6.28 C-1.400,-4.400 -0.600,-2.400 0,-0.800z" fill="#fffdf0"/><path transform="translate(40.05,39.85) rotate(180)" d="M0,-0.800 C0.600,-2.400 1.400,-4.400 1.400,-6.28 C1.400,-7.98 -1.400,-7.98 -1.400,-6.28 C-1.400,-4.400 -0.600,-2.400 0,-0.800z" fill="#fffdf0"/><path transform="translate(40.05,39.85) rotate(225)" d="M0,-0.800 C0.600,-2.400 1.400,-4.400 1.400,-6.28 C1.400,-7.98 -1.400,-7.98 -1.400,-6.28 C-1.400,-4.400 -0.600,-2.400 0,-0.800z" fill="#fffdf0"/><path transform="translate(40.05,39.85) rotate(270)" d="M0,-0.800 C0.600,-2.400 1.400,-4.400 1.400,-6.28 C1.400,-7.98 -1.400,-7.98 -1.400,-6.28 C-1.400,-4.400 -0.600,-2.400 0,-0.800z" fill="#fffdf0"/><path transform="translate(40.05,39.85) rotate(315)" d="M0,-0.800 C0.600,-2.400 1.400,-4.400 1.400,-6.28 C1.400,-7.98 -1.400,-7.98 -1.400,-6.28 C-1.400,-4.400 -0.600,-2.400 0,-0.800z" fill="#fffdf0"/></svg>
<svg class="i" style="left:146px;top:139px;" width="48" height="48" viewBox="0 0 48 48"><path d="M5.100,6 L17.600,35 L31.500,6 H43.200" fill="none" stroke="#2d4763" stroke-width="3.200" stroke-linejoin="round"/><circle cx="5.1" cy="6" r="3.2" fill="#f2f2f2" stroke="#2d4763" stroke-width="2.200"/><circle cx="31.5" cy="6" r="3.2" fill="#f2f2f2" stroke="#2d4763" stroke-width="2.200"/><circle cx="43.2" cy="6.3" r="3.2" fill="#f2f2f2" stroke="#2d4763" stroke-width="2.200"/><circle cx="17.6" cy="35" r="3.2" fill="#f2f2f2" stroke="#2d4763" stroke-width="2.200"/><rect x="30.1" y="31" width="17.7" height="17.7" rx="3.600" fill="#c9a20a"/><rect x="31.3" y="32.2" width="15.3" height="7.965" rx="2.600" fill="#dcc04c" opacity=".45"/><path transform="translate(38.95,39.85) rotate(0)" d="M0,-0.800 C0.600,-2.400 1.400,-4.400 1.400,-6.28 C1.400,-7.98 -1.400,-7.98 -1.400,-6.28 C-1.400,-4.400 -0.600,-2.400 0,-0.800z" fill="#fffdf0"/><path transform="translate(38.95,39.85) rotate(45)" d="M0,-0.800 C0.600,-2.400 1.400,-4.400 1.400,-6.28 C1.400,-7.98 -1.400,-7.98 -1.400,-6.28 C-1.400,-4.400 -0.600,-2.400 0,-0.800z" fill="#fffdf0"/><path transform="translate(38.95,39.85) rotate(90)" d="M0,-0.800 C0.600,-2.400 1.400,-4.400 1.400,-6.28 C1.400,-7.98 -1.400,-7.98 -1.400,-6.28 C-1.400,-4.400 -0.600,-2.400 0,-0.800z" fill="#fffdf0"/><path transform="translate(38.95,39.85) rotate(135)" d="M0,-0.800 C0.600,-2.400 1.400,-4.400 1.400,-6.28 C1.400,-7.98 -1.400,-7.98 -1.400,-6.28 C-1.400,-4.400 -0.600,-2.400 0,-0.800z" fill="#fffdf0"/><path transform="translate(38.95,39.85) rotate(180)" d="M0,-0.800 C0.600,-2.400 1.400,-4.400 1.400,-6.28 C1.400,-7.98 -1.400,-7.98 -1.400,-6.28 C-1.400,-4.400 -0.600,-2.400 0,-0.800z" fill="#fffdf0"/><path transform="translate(38.95,39.85) rotate(225)" d="M0,-0.800 C0.600,-2.400 1.400,-4.400 1.400,-6.28 C1.400,-7.98 -1.400,-7.98 -1.400,-6.28 C-1.400,-4.400 -0.600,-2.400 0,-0.800z" fill="#fffdf0"/><path transform="translate(38.95,39.85) rotate(270)" d="M0,-0.800 C0.600,-2.400 1.400,-4.400 1.400,-6.28 C1.400,-7.98 -1.400,-7.98 -1.400,-6.28 C-1.400,-4.400 -0.600,-2.400 0,-0.800z" fill="#fffdf0"/><path transform="translate(38.95,39.85) rotate(315)" d="M0,-0.800 C0.600,-2.400 1.400,-4.400 1.400,-6.28 C1.400,-7.98 -1.400,-7.98 -1.400,-6.28 C-1.400,-4.400 -0.600,-2.400 0,-0.800z" fill="#fffdf0"/></svg>
<svg class="i" style="left:215px;top:139px;" width="48" height="48" viewBox="0 0 48 48"><path d="M-0.300,48.100 C1,42 3.500,37 7,32.200 C9.500,26.500 12.500,21.500 16.100,17.400 C19.500,13 23,9.800 27.500,7.200 C33,5.200 39,4 44,0.900 C44.500,4.500 44.400,8 43.400,11.700 C41.500,15.500 39,19 35.500,22 C32,25 28,27.800 24.100,29.900 C20,32.300 16.500,34.500 12.700,36.200 C10,37.500 7.500,38.500 4.800,39 C3.500,40.500 2.300,42 1.400,43.500 C1,45 0.600,46.500 0.300,48.100z" fill="#cfe0f3" stroke="#2d4763" stroke-width="1.200" stroke-linejoin="round"/><path d="M9,34 L14,31.500 M10.500,30.500 L18,27.500 M12.500,27 L22,24.500 M14.500,23.500 L26,21.500 M17,20 L30,18.500 M20,16.500 L33.500,15.500 M23.500,13.500 L37,12.500 M27,10.500 L40,9.500 M31,8 L42.500,6.500 M36,6 L43.500,3.500" fill="none" stroke="#5a8ac2" stroke-width="1.500"/><path d="M0.200,47.800 C2.500,38 8,27 16,18.500 C24,10.500 33,5.500 43.600,1.400" fill="none" stroke="#2d4763" stroke-width="1.700"/><rect x="29.2" y="31" width="17.7" height="17.7" rx="3.600" fill="#c9a20a"/><rect x="30.4" y="32.2" width="15.3" height="7.965" rx="2.600" fill="#dcc04c" opacity=".45"/><path transform="translate(38.05,39.85) rotate(0)" d="M0,-0.800 C0.600,-2.400 1.400,-4.400 1.400,-6.28 C1.400,-7.98 -1.400,-7.98 -1.400,-6.28 C-1.400,-4.400 -0.600,-2.400 0,-0.800z" fill="#fffdf0"/><path transform="translate(38.05,39.85) rotate(45)" d="M0,-0.800 C0.600,-2.400 1.400,-4.400 1.400,-6.28 C1.400,-7.98 -1.400,-7.98 -1.400,-6.28 C-1.400,-4.400 -0.600,-2.400 0,-0.800z" fill="#fffdf0"/><path transform="translate(38.05,39.85) rotate(90)" d="M0,-0.800 C0.600,-2.400 1.400,-4.400 1.400,-6.28 C1.400,-7.98 -1.400,-7.98 -1.400,-6.28 C-1.400,-4.400 -0.600,-2.400 0,-0.800z" fill="#fffdf0"/><path transform="translate(38.05,39.85) rotate(135)" d="M0,-0.800 C0.600,-2.400 1.400,-4.400 1.400,-6.28 C1.400,-7.98 -1.400,-7.98 -1.400,-6.28 C-1.400,-4.400 -0.600,-2.400 0,-0.800z" fill="#fffdf0"/><path transform="translate(38.05,39.85) rotate(180)" d="M0,-0.800 C0.600,-2.400 1.400,-4.400 1.400,-6.28 C1.400,-7.98 -1.400,-7.98 -1.400,-6.28 C-1.400,-4.400 -0.600,-2.400 0,-0.800z" fill="#fffdf0"/><path transform="translate(38.05,39.85) rotate(225)" d="M0,-0.800 C0.600,-2.400 1.400,-4.400 1.400,-6.28 C1.400,-7.98 -1.400,-7.98 -1.400,-6.28 C-1.400,-4.400 -0.600,-2.400 0,-0.800z" fill="#fffdf0"/><path transform="translate(38.05,39.85) rotate(270)" d="M0,-0.800 C0.600,-2.400 1.400,-4.400 1.400,-6.28 C1.400,-7.98 -1.400,-7.98 -1.400,-6.28 C-1.400,-4.400 -0.600,-2.400 0,-0.800z" fill="#fffdf0"/><path transform="translate(38.05,39.85) rotate(315)" d="M0,-0.800 C0.600,-2.400 1.400,-4.400 1.400,-6.28 C1.400,-7.98 -1.400,-7.98 -1.400,-6.28 C-1.400,-4.400 -0.600,-2.400 0,-0.800z" fill="#fffdf0"/></svg>
<svg class="i" style="left:283px;top:139px;" width="48" height="48" viewBox="0 0 48 48"><path d="M12,6 V14 M18,6 V14 M24,6 V14 M30,6 V14 M36,6 V14 M12,34 V40.700 M18,34 V40.700 M24,34 V40.700" stroke="#2d5a94" stroke-width="1.900"/><rect x="6.600" y="14.500" width="34.800" height="18.900" rx="2.400" fill="#6d9bcb" stroke="#2d4f7a" stroke-width="2.200"/><path d="M8.600,31 V16.500 H39" fill="none" stroke="#a9c6e6" stroke-width="1.200"/><rect x="29.4" y="31" width="17.7" height="17.7" rx="3.600" fill="#c9a20a"/><rect x="30.6" y="32.2" width="15.3" height="7.965" rx="2.600" fill="#dcc04c" opacity=".45"/><path transform="translate(38.25,39.85) rotate(0)" d="M0,-0.800 C0.600,-2.400 1.400,-4.400 1.400,-6.28 C1.400,-7.98 -1.400,-7.98 -1.400,-6.28 C-1.400,-4.400 -0.600,-2.400 0,-0.800z" fill="#fffdf0"/><path transform="translate(38.25,39.85) rotate(45)" d="M0,-0.800 C0.600,-2.400 1.400,-4.400 1.400,-6.28 C1.400,-7.98 -1.400,-7.98 -1.400,-6.28 C-1.400,-4.400 -0.600,-2.400 0,-0.800z" fill="#fffdf0"/><path transform="translate(38.25,39.85) rotate(90)" d="M0,-0.800 C0.600,-2.400 1.400,-4.400 1.400,-6.28 C1.400,-7.98 -1.400,-7.98 -1.400,-6.28 C-1.400,-4.400 -0.600,-2.400 0,-0.800z" fill="#fffdf0"/><path transform="translate(38.25,39.85) rotate(135)" d="M0,-0.800 C0.600,-2.400 1.400,-4.400 1.400,-6.28 C1.400,-7.98 -1.400,-7.98 -1.400,-6.28 C-1.400,-4.400 -0.600,-2.400 0,-0.800z" fill="#fffdf0"/><path transform="translate(38.25,39.85) rotate(180)" d="M0,-0.800 C0.600,-2.400 1.400,-4.400 1.400,-6.28 C1.400,-7.98 -1.400,-7.98 -1.400,-6.28 C-1.400,-4.400 -0.600,-2.400 0,-0.800z" fill="#fffdf0"/><path transform="translate(38.25,39.85) rotate(225)" d="M0,-0.800 C0.600,-2.400 1.400,-4.400 1.400,-6.28 C1.400,-7.98 -1.400,-7.98 -1.400,-6.28 C-1.400,-4.400 -0.600,-2.400 0,-0.800z" fill="#fffdf0"/><path transform="translate(38.25,39.85) rotate(270)" d="M0,-0.800 C0.600,-2.400 1.400,-4.400 1.400,-6.28 C1.400,-7.98 -1.400,-7.98 -1.400,-6.28 C-1.400,-4.400 -0.600,-2.400 0,-0.800z" fill="#fffdf0"/><path transform="translate(38.25,39.85) rotate(315)" d="M0,-0.800 C0.600,-2.400 1.400,-4.400 1.400,-6.28 C1.400,-7.98 -1.400,-7.98 -1.400,-6.28 C-1.400,-4.400 -0.600,-2.400 0,-0.800z" fill="#fffdf0"/></svg>
<svg class="i" style="left:350px;top:139px;" width="48" height="48" viewBox="0 0 48 48"><defs><linearGradient id="gms" x1="0" y1="0" x2="1" y2="1"><stop offset="0" stop-color="#cfe0f3"/><stop offset="1" stop-color="#6d9bcb"/></linearGradient><linearGradient id="gms2" x1="0" y1="0" x2="0" y2="1"><stop offset="0" stop-color="#a9c6e6"/><stop offset="1" stop-color="#6d9bcb"/></linearGradient></defs><path d="M3.400,4.100 H44.700 V27.600 H26.500 V45.800 H3.400z" fill="url(#gms)" stroke="#24425f" stroke-width="2.400" stroke-linejoin="miter"/><rect x="4.600" y="29" width="20.800" height="15.600" fill="url(#gms2)"/><path d="M3.400,27.900 H44.700 M26.600,4.100 V45.800 M3.400,4.100 L26.600,27.900 M26.600,4.100 L3.400,27.900 M44.700,4.100 L26.600,27.900 M3.400,37.300 H26.600 M14.700,27.900 V45.800" fill="none" stroke="#24425f" stroke-width="2"/><rect x="30.6" y="31" width="17.7" height="17.7" rx="3.600" fill="#c9a20a"/><rect x="31.8" y="32.2" width="15.3" height="7.965" rx="2.600" fill="#dcc04c" opacity=".45"/><path transform="translate(39.45,39.85) rotate(0)" d="M0,-0.800 C0.600,-2.400 1.400,-4.400 1.400,-6.28 C1.400,-7.98 -1.400,-7.98 -1.400,-6.28 C-1.400,-4.400 -0.600,-2.400 0,-0.800z" fill="#fffdf0"/><path transform="translate(39.45,39.85) rotate(45)" d="M0,-0.800 C0.600,-2.400 1.400,-4.400 1.400,-6.28 C1.400,-7.98 -1.400,-7.98 -1.400,-6.28 C-1.400,-4.400 -0.600,-2.400 0,-0.800z" fill="#fffdf0"/><path transform="translate(39.45,39.85) rotate(90)" d="M0,-0.800 C0.600,-2.400 1.400,-4.400 1.400,-6.28 C1.400,-7.98 -1.400,-7.98 -1.400,-6.28 C-1.400,-4.400 -0.600,-2.400 0,-0.800z" fill="#fffdf0"/><path transform="translate(39.45,39.85) rotate(135)" d="M0,-0.800 C0.600,-2.400 1.400,-4.400 1.400,-6.28 C1.400,-7.98 -1.400,-7.98 -1.400,-6.28 C-1.400,-4.400 -0.600,-2.400 0,-0.800z" fill="#fffdf0"/><path transform="translate(39.45,39.85) rotate(180)" d="M0,-0.800 C0.600,-2.400 1.400,-4.400 1.400,-6.28 C1.400,-7.98 -1.400,-7.98 -1.400,-6.28 C-1.400,-4.400 -0.600,-2.400 0,-0.800z" fill="#fffdf0"/><path transform="translate(39.45,39.85) rotate(225)" d="M0,-0.800 C0.600,-2.400 1.400,-4.400 1.400,-6.28 C1.400,-7.98 -1.400,-7.98 -1.400,-6.28 C-1.400,-4.400 -0.600,-2.400 0,-0.800z" fill="#fffdf0"/><path transform="translate(39.45,39.85) rotate(270)" d="M0,-0.800 C0.600,-2.400 1.400,-4.400 1.400,-6.28 C1.400,-7.98 -1.400,-7.98 -1.400,-6.28 C-1.400,-4.400 -0.600,-2.400 0,-0.800z" fill="#fffdf0"/><path transform="translate(39.45,39.85) rotate(315)" d="M0,-0.800 C0.600,-2.400 1.400,-4.400 1.400,-6.28 C1.400,-7.98 -1.400,-7.98 -1.400,-6.28 C-1.400,-4.400 -0.600,-2.400 0,-0.800z" fill="#fffdf0"/></svg>
<svg class="i" style="left:419px;top:139px;" width="48" height="48" viewBox="0 0 48 48"><defs><linearGradient id="gvl" x1="0" y1="0" x2="1" y2="1"><stop offset="0" stop-color="#eef2f9"/><stop offset=".45" stop-color="#c9d9ee"/><stop offset="1" stop-color="#7fa6d6"/></linearGradient><clipPath id="cvl"><rect x="2" y="3.800" width="42.200" height="42.300" rx="2.600"/></clipPath></defs><rect x="2" y="3.800" width="42.200" height="42.300" rx="3" fill="url(#gvl)" stroke="#2d4f7a" stroke-width="1.800"/><g clip-path="url(#cvl)"><path d="M3.700,6 L15.900,36.700 L29.900,6 H43.700" fill="none" stroke="#2d4763" stroke-width="3.200" stroke-linejoin="round"/><circle cx="3.7" cy="6" r="3.3" fill="#f4f4f4" stroke="#2d4763" stroke-width="2.200"/><circle cx="29.9" cy="6" r="3.3" fill="#f4f4f4" stroke="#2d4763" stroke-width="2.200"/><circle cx="43.7" cy="6" r="3.3" fill="#f4f4f4" stroke="#2d4763" stroke-width="2.200"/></g><circle cx="15.9" cy="36.7" r="3.7" fill="#f4f4f4" stroke="#2d4763" stroke-width="2.200"/><rect x="29.2" y="31" width="17.7" height="17.7" rx="3.600" fill="#c9a20a"/><rect x="30.4" y="32.2" width="15.3" height="7.965" rx="2.600" fill="#dcc04c" opacity=".45"/><path transform="translate(38.05,39.85) rotate(0)" d="M0,-0.800 C0.600,-2.400 1.400,-4.400 1.400,-6.28 C1.400,-7.98 -1.400,-7.98 -1.400,-6.28 C-1.400,-4.400 -0.600,-2.400 0,-0.800z" fill="#fffdf0"/><path transform="translate(38.05,39.85) rotate(45)" d="M0,-0.800 C0.600,-2.400 1.400,-4.400 1.400,-6.28 C1.400,-7.98 -1.400,-7.98 -1.400,-6.28 C-1.400,-4.400 -0.600,-2.400 0,-0.800z" fill="#fffdf0"/><path transform="translate(38.05,39.85) rotate(90)" d="M0,-0.800 C0.600,-2.400 1.400,-4.400 1.400,-6.28 C1.400,-7.98 -1.400,-7.98 -1.400,-6.28 C-1.400,-4.400 -0.600,-2.400 0,-0.800z" fill="#fffdf0"/><path transform="translate(38.05,39.85) rotate(135)" d="M0,-0.800 C0.600,-2.400 1.400,-4.400 1.400,-6.28 C1.400,-7.98 -1.400,-7.98 -1.400,-6.28 C-1.400,-4.400 -0.600,-2.400 0,-0.800z" fill="#fffdf0"/><path transform="translate(38.05,39.85) rotate(180)" d="M0,-0.800 C0.600,-2.400 1.400,-4.400 1.400,-6.28 C1.400,-7.98 -1.400,-7.98 -1.400,-6.28 C-1.400,-4.400 -0.600,-2.400 0,-0.800z" fill="#fffdf0"/><path transform="translate(38.05,39.85) rotate(225)" d="M0,-0.800 C0.600,-2.400 1.400,-4.400 1.400,-6.28 C1.400,-7.98 -1.400,-7.98 -1.400,-6.28 C-1.400,-4.400 -0.600,-2.400 0,-0.800z" fill="#fffdf0"/><path transform="translate(38.05,39.85) rotate(270)" d="M0,-0.800 C0.600,-2.400 1.400,-4.400 1.400,-6.28 C1.400,-7.98 -1.400,-7.98 -1.400,-6.28 C-1.400,-4.400 -0.600,-2.400 0,-0.800z" fill="#fffdf0"/><path transform="translate(38.05,39.85) rotate(315)" d="M0,-0.800 C0.600,-2.400 1.400,-4.400 1.400,-6.28 C1.400,-7.98 -1.400,-7.98 -1.400,-6.28 C-1.400,-4.400 -0.600,-2.400 0,-0.800z" fill="#fffdf0"/></svg>
<div style="position:absolute;left:489.5px;top:154.4px;width:3px;height:19.1px;background:#a9a9a9;border-radius:2px"></div>
<svg class="i" style="left:506px;top:139px;" width="48" height="48" viewBox="0 0 48 48"><g transform="translate(21.5,4.9) rotate(26.57)"><rect x="-4.7" y="0" width="9.4" height="4.600" fill="#8b8b8b" stroke="#7a7674" stroke-width=".7"/><rect x="-4.7" y="4.600" width="9.4" height="29.0878" fill="#7b7775" stroke="#7a7674" stroke-width="1"/><rect x="-2.632" y="4.600" width="2.82" height="29.0878" fill="#7f7b79"/><path d="M-4.7,33.6878 L0,44.4978 L4.7,33.6878 z" fill="#8a8a8a" stroke="#7c7c7c" stroke-width=".9" stroke-linejoin="round"/><path d="M0.600,33.6878 L0,44.4978 L4.3,33.6878 z" fill="#808080"/><path d="M-1.41,41.2548 L0,44.4978 L1.41,41.2548 z" fill="#6e6e6e"/></g><g transform="translate(35.1,6) rotate(30.10)"><rect x="-4.9" y="0" width="9.8" height="4.600" fill="#8d8d8d" stroke="#7a7674" stroke-width=".7"/><rect x="-4.9" y="4.600" width="9.8" height="32.7897" fill="#7b7775" stroke="#7a7674" stroke-width="1"/><rect x="-2.744" y="4.600" width="2.94" height="32.7897" fill="#7f7b79"/><path d="M-4.9,37.3897 L0,48.6597 L4.9,37.3897 z" fill="#8c8c8c" stroke="#7c7c7c" stroke-width=".9" stroke-linejoin="round"/><path d="M0.600,37.3897 L0,48.6597 L4.5,37.3897 z" fill="#808080"/><path d="M-1.47,45.2787 L0,48.6597 L1.47,45.2787 z" fill="#6e6e6e"/></g></svg>
<svg class="i" style="left:546.5px;top:179.2px" width="9" height="8" viewBox="0 0 10 9"><path d="M0.500,0.700h9l-4.500,7.800z" fill="#8c8c8c"/></svg>
<svg class="i" style="left:570px;top:139px;" width="48" height="48" viewBox="0 0 48 48"><g transform="translate(33.3,5.2) rotate(30.31)"><rect x="-6" y="0" width="12" height="4.600" fill="#f4f4f4" stroke="#a08c10" stroke-width=".7"/><rect x="-6" y="4.600" width="12" height="31.5264" fill="#e6c814" stroke="#a08c10" stroke-width="1"/><rect x="2.4" y="4.600" width="3.2" height="31.5264" fill="#c4a208"/><rect x="-3.36" y="4.600" width="3.6" height="31.5264" fill="#fdf59a"/><path d="M-6,36.1264 L0,49.9264 L6,36.1264 z" fill="#f2f2f2" stroke="#777" stroke-width=".9" stroke-linejoin="round"/><path d="M0.600,36.1264 L0,49.9264 L5.6,36.1264 z" fill="#b9b9b9"/><path d="M-1.8,45.7864 L0,49.9264 L1.8,45.7864 z" fill="#4a4a4a"/></g></svg>
<svg class="i" style="left:637px;top:139px;" width="48" height="48" viewBox="0 0 48 48"><rect x="4.900" y="4.600" width="36.400" height="36.800" rx="3.200" fill="#808285" stroke="#6c7075" stroke-width="1.600"/><rect x="10.600" y="7" width="24.700" height="13.250" fill="#8c8c8c"/><path d="M13.500,10H32.500 M13.500,13.500H32.500 M13.500,17.200H32.500" stroke="#777" stroke-width="2"/><rect x="12.500" y="29.300" width="23" height="12" fill="#8e8e8e"/><rect x="14.600" y="31.300" width="5.400" height="7.700" fill="#787b80"/><g transform="translate(44.7,20.8) rotate(30.77)"><rect x="-4.2" y="0" width="8.4" height="4.600" fill="#929292" stroke="#776a63" stroke-width=".7"/><rect x="-4.2" y="4.600" width="8.4" height="16.8157" fill="#7f7068" stroke="#776a63" stroke-width="1"/><rect x="-2.352" y="4.600" width="2.52" height="16.8157" fill="#86776f"/><path d="M-4.2,21.4157 L0,31.0757 L4.2,21.4157 z" fill="#979797" stroke="#808080" stroke-width=".9" stroke-linejoin="round"/><path d="M0.600,21.4157 L0,31.0757 L3.8,21.4157 z" fill="#858585"/><path d="M-1.26,28.1777 L0,31.0757 L1.26,28.1777 z" fill="#6a6a6a"/></g></svg>
<svg class="i" style="left:706px;top:139px;" width="48" height="48" viewBox="0 0 48 48"><path d="M13.800,35 L34.800,14.600" stroke="#828a84" stroke-width="2.700" stroke-dasharray="5 4.200" stroke-dashoffset="2"/><rect x="4.300" y="37.200" width="7.600" height="7.600" fill="#8b8b8b" stroke="#7f7f7f" stroke-width="1.400"/><rect x="36.100" y="5.400" width="7.600" height="7.600" fill="#8b8b8b" stroke="#7f7f7f" stroke-width="1.400"/></svg>
<svg class="i" style="left:768.5px;top:160.8px" width="9" height="8" viewBox="0 0 10 9"><path d="M0.500,0.700h9l-4.500,7.800z" fill="#8c8c8c"/></svg>
<svg class="i" style="left:798px;top:139px;" width="48" height="48" viewBox="0 0 48 48"><path d="M3.200,12.500 C3.200,5 12,2.600 20,4.500 C28,6.400 32,9 38,7.500 C44,6 47,10 46.500,16 C46,22 42,26.500 36,25 C30,23.500 24,20.500 18,23.500 C12,26.500 3.200,22 3.200,12.500z" fill="#868b87" stroke="#6d6f6d" stroke-width="1.500"/><rect x="26.300" y="27" width="21.600" height="21.600" rx="4" fill="#7d7a66"/><path d="M37.100,30 V45.600 M29.300,37.800 H44.900 M31.600,32.300 L42.600,43.300 M42.600,32.300 L31.600,43.300" stroke="#929292" stroke-width="2.200" stroke-linecap="round"/><circle cx="37.100" cy="37.800" r="3.900" fill="#929292"/><circle cx="37.100" cy="37.800" r="1.900" fill="#7d7a66"/></svg>
<svg class="i" style="left:866px;top:139px;" width="48" height="48" viewBox="0 0 48 48"><path d="M21.800,12.900 H41.700 M14.200,18.800 L5.400,43.500" stroke="#696969" stroke-width="1.400" fill="none"/><rect x="10.500" y="7.600" width="10.700" height="10.700" fill="#868686" stroke="#7b7b7b" stroke-width="1.200"/><path d="M12.300,9.400 L19.400,16.500 M19.400,9.400 L12.300,16.500" stroke="#959595" stroke-width="2.200"/><path d="M44,22 L34.500,31.500" stroke="#8f8f8f" stroke-width="1.500"/><path d="M33,32.500 L21.500,44.500" stroke="#8a8672" stroke-width="5.600" stroke-linecap="butt"/><path d="M31.500,29.500 L43,42.500" stroke="#7f786a" stroke-width="5.400" stroke-linecap="butt"/><path d="M20.200,27.600 C22,24.500 27,21.500 32.500,21.200 C33.500,21.600 33.600,22.600 33,23.400 L24,32.200 C22.500,32.600 19.600,29.600 20.200,27.600z" fill="#8f8f8f"/></svg>
<svg class="i" style="left:928.5px;top:160.8px" width="9" height="8" viewBox="0 0 10 9"><path d="M0.500,0.700h9l-4.500,7.800z" fill="#8c8c8c"/></svg>
<svg class="i" style="left:958px;top:139px;" width="48" height="48" viewBox="0 0 48 48"><rect x="5.500" y="6.500" width="37.300" height="9.100" fill="#88857b" stroke="#7d7a68" stroke-width="1.500"/><rect x="5.500" y="20.400" width="37.300" height="9.100" fill="#88857b" stroke="#7d7a68" stroke-width="1.500"/><rect x="5.500" y="34.200" width="37.300" height="9.600" fill="#88857b" stroke="#7d7a68" stroke-width="1.500"/><g transform="translate(40.1,5.6) rotate(29.70)"><rect x="-5.4" y="0" width="10.8" height="4.600" fill="#9c9c9c" stroke="#5e5b59" stroke-width=".7"/><rect x="-5.4" y="4.600" width="10.8" height="31.2171" fill="#897e79" stroke="#5e5b59" stroke-width="1"/><rect x="2.16" y="4.600" width="2.84" height="31.2171" fill="#6f6a68"/><rect x="-3.024" y="4.600" width="3.24" height="31.2171" fill="#94888200"/><path d="M-5.4,35.8171 L0,48.2371 L5.4,35.8171 z" fill="#a2a2a2" stroke="#5e5e5e" stroke-width=".9" stroke-linejoin="round"/><path d="M0.600,35.8171 L0,48.2371 L5,35.8171 z" fill="#808080"/><path d="M-1.62,44.5111 L0,48.2371 L1.62,44.5111 z" fill="#5e5e5e"/></g></svg>
<svg class="i" style="left:1024px;top:139px;" width="48" height="48" viewBox="0 0 48 48"><rect x="6.800" y="6.200" width="25.700" height="25.800" fill="#88857b" stroke="#7f7b66" stroke-width="1.500"/><path d="M10.400,17.400 H41.900 L40,47 H12.100z" fill="#786867"/><path d="M12.300,11.150 H39.800" stroke="#786867" stroke-width="3.900" stroke-linecap="round"/><path d="M22.400,10 C22.800,4.800 32.200,4.800 32.600,10" fill="none" stroke="#786867" stroke-width="2.200"/><path d="M14.400,21.400 H21.800 L21.400,43 H15.800z M23.500,21.400 H29.200 V43 H23.500z M30.900,21.400 H37.900 L36.500,43 H31.200z" fill="#89807f"/></svg>
<svg class="i" style="left:1094px;top:139px;" width="48" height="48" viewBox="0 0 48 48"><path d="M3.700,23.100 C12,22.300 22,22 30.800,21.400 L31.800,23.800 C25,26.800 15,26.600 8,25.400z" fill="#8f8f8f"/><path d="M9.200,12.300 C17,16 26,21.500 35,28.600 L32.600,31.200 C25,24.500 17,18.800 9.200,12.300z" fill="#929292"/><ellipse cx="39.300" cy="18" rx="7" ry="4.300" transform="rotate(-35 39.300 18)" fill="none" stroke="#766562" stroke-width="2.400"/><ellipse cx="38.500" cy="33.300" rx="7" ry="4.300" transform="rotate(48 38.500 33.300)" fill="none" stroke="#766562" stroke-width="2.400"/><path d="M30.800,20.800 L32.600,22.500 L30.800,24.200 L29,22.500z" fill="#9a9a9a"/></svg>
<svg class="i" style="left:1160px;top:139px;" width="48" height="48" viewBox="0 0 48 48"><path d="M19.4,6.4 H33.2 L40.2,13.4 V35.6 H19.4 z" fill="#8b8b8b" stroke="#7f7f7f" stroke-width="1.3" stroke-linejoin="miter"/><path d="M33.2,6.4 V13.4 H40.2 z" fill="#7f7f7f"/><path d="M34.6,9.2 V12 H37.4 z" fill="#8b8b8b"/><path d="M11.7,14.7 H25.1 L32.1,21.7 V43.2 H11.7 z" fill="#979797" stroke="#696969" stroke-width="1.8" stroke-linejoin="miter"/><path d="M25.1,14.7 V21.7 H32.1 z" fill="#696969"/><path d="M26.5,17.5 V20.3 H29.3 z" fill="#979797"/><path d="M14.9,24 h12.5" stroke="#767676" stroke-width="2"/><path d="M14.9,28 h14.8" stroke="#767676" stroke-width="2"/><path d="M14.9,32 h9.7" stroke="#767676" stroke-width="2"/><path d="M14.9,35.8 h13.7" stroke="#767676" stroke-width="2"/><path d="M14.9,39.9 h13.7" stroke="#767676" stroke-width="2"/></svg>
<svg class="i" style="left:1229px;top:139px;" width="48" height="48" viewBox="0 0 48 48"><rect x="11.800" y="7.800" width="26.500" height="34.500" fill="#6e6d6b" stroke="#8d8b86" stroke-width="2"/><rect x="17.100" y="4.900" width="15.900" height="5.700" fill="#8d8d8d"/><path d="M15.4,13.6 H29.2 L36.2,20.6 V38.6 H15.4 z" fill="#959595" stroke="#6c6c6c" stroke-width="1.6" stroke-linejoin="miter"/><path d="M29.2,13.6 V20.6 H36.2 z" fill="#6c6c6c"/><path d="M30.6,16.4 V19.2 H33.4 z" fill="#959595"/><path d="M18.6,20 h12.5" stroke="#767676" stroke-width="2"/><path d="M18.6,24 h14.8" stroke="#767676" stroke-width="2"/><path d="M18.6,28 h9.7" stroke="#767676" stroke-width="2"/><path d="M18.6,32 h13.7" stroke="#767676" stroke-width="2"/><path d="M18.6,35.9 h13.7" stroke="#767676" stroke-width="2"/></svg>
<svg class="i" style="left:1317.7px;top:158.2px;" width="10" height="10" viewBox="0 0 10 10"><path d="M1,1.700 L3.900,5 L1,8.300 M5.800,1.700 L8.700,5 L5.800,8.300" fill="none" stroke="#3a3a3a" stroke-width="1.500"/></svg>
<div style="position:absolute;left:1345.1px;top:154px;width:3px;height:19.5px;background:#a2a2a2;border-radius:2px"></div>
<svg class="i" style="left:1360px;top:139px;" width="48" height="48" viewBox="0 0 48 48"><rect x="5.200" y="10.300" width="37.600" height="13.400" fill="#e4e9f3" stroke="#24467a" stroke-width="2.200"/><rect x="9.600" y="11.400" width="4.600" height="11.200" fill="#a9c6e6"/><rect x="28.300" y="11.400" width="7.600" height="11.200" fill="#a9c6e6"/><rect x="35.900" y="11.400" width="3" height="11.200" fill="#cddcf0"/><path d="M15.300,6.400 H24.700 V9.600 H20.300 V24.600 H24.700 V27.700 H15.300z" fill="#6d9bcb" stroke="#24467a" stroke-width="2" stroke-linejoin="miter"/><path d="M19.100,27.700 V32.600 M18,16.800 h2.400" stroke="#24467a" stroke-width="1.800"/></svg>
<svg class="i" style="left:1426px;top:139px;" width="48" height="48" viewBox="0 0 48 48"><circle cx="24" cy="24.8" r="16" fill="none" stroke="#6a6c6e" stroke-width="1.6" stroke-dasharray="15.08 10.05" stroke-dashoffset="-5.03" opacity="1"/><circle cx="24" cy="24.8" r="9.5" fill="none" stroke="#6a6c6e" stroke-width="1.3" stroke-dasharray="8.95 5.97" stroke-dashoffset="-2.98" opacity="0.7"/><path d="M3,24.8 H45 M24,3.8 V45.8" stroke="#6e747a" stroke-width="3.2" stroke-linecap="round"/></svg>
<div style="position:absolute;left:1487.7px;top:157.2px;width:2px;height:13.9px;background:#3a3a3a;border-radius:2px"></div>
<svg class="i" style="left:1501px;top:139px;" width="48" height="48" viewBox="0 0 48 48"><rect x="8.100" y="8.300" width="25.800" height="25.300" fill="#ececec" stroke="#8b8b82" stroke-width="2"/><circle cx="27.100" cy="27.300" r="13.200" fill="none" stroke="#2d4f80" stroke-width="2" stroke-dasharray="14.500 6.230" stroke-dashoffset="-3.100"/><path d="M12.600,27.300 H41.700 M27.100,12.400 V41.600" stroke="#4a86d0" stroke-width="4" stroke-linecap="round"/><path d="M12.600,26.600 H41.700 M26.400,12.400 V41.600" stroke="#7fb0e6" stroke-width="1.200" stroke-linecap="round" opacity=".8"/></svg>
<svg class="i" style="left:1546.5px;top:178.8px" width="9" height="8" viewBox="0 0 10 9"><path d="M0.500,0.700h9l-4.500,7.800z" fill="#a8a8a8"/></svg>
<svg class="i" style="left:1571px;top:139px;" width="48" height="48" viewBox="0 0 48 48"><circle cx="18.8" cy="19" r="13" fill="none" stroke="#6a6c6e" stroke-width="1.6" stroke-dasharray="12.25 8.17" stroke-dashoffset="-4.08" opacity="1"/><circle cx="18.8" cy="19" r="7.5" fill="none" stroke="#6a6c6e" stroke-width="1.3" stroke-dasharray="7.07 4.71" stroke-dashoffset="-2.36" opacity="0.7"/><path d="M3.2,19 H34.4 M18.8,3.4 V34.6" stroke="#6e747a" stroke-width="3.2" stroke-linecap="round"/><path d="M7.600,46 C11,36 16,26 26,19.500 C31,16.500 37,13.500 42.600,11.600" fill="none" stroke="#8c8c8c" stroke-width="2.600" stroke-dasharray="4 3"/><rect x="29.200" y="31.400" width="15.600" height="15.300" rx="3.200" fill="#7c7c7c"/><path d="M31.800,39 H42.200 M37,33.800 V44.200" stroke="#979797" stroke-width="3.600" stroke-linecap="round"/></svg>
<svg class="i" style="left:1699.8px;top:158.5px;" width="10" height="10" viewBox="0 0 10 10"><path d="M1,1.700 L3.900,5 L1,8.300 M5.800,1.700 L8.700,5 L5.800,8.300" fill="none" stroke="#3a3a3a" stroke-width="1.500"/></svg>
<div style="position:absolute;left:1727.3px;top:154.5px;width:3.2px;height:18.8px;background:#ababab;border-radius:2px"></div>
<svg class="i" style="left:1741px;top:139px;" width="48" height="48" viewBox="0 0 48 48"><rect x="2" y="3.950" width="42.050" height="38.100" fill="#e6e6e6" stroke="#3c3c3c" stroke-width="1.700" stroke-dasharray="2.700 2"/><rect x="4.050" y="5.950" width="25.900" height="25.900" fill="#fde84e" stroke="#d9a90f" stroke-width="2.300"/><path d="M18.250,18.100 L29.800,45.400 L34.500,38.600 L42.600,48 L46.500,44.600 L38.300,35.600 L44.900,31.750z" fill="#fff" stroke="#0a0a0a" stroke-width="1.600" stroke-linejoin="round"/></svg>
<svg class="i" style="left:1802.5px;top:161px" width="9" height="8" viewBox="0 0 10 9"><path d="M0.500,0.700h9l-4.500,7.800z" fill="#a8a8a8"/></svg>
<svg class="i" style="left:1833.8px;top:158.5px;" width="10" height="10" viewBox="0 0 10 10"><path d="M1,1.700 L3.900,5 L1,8.300 M5.800,1.700 L8.700,5 L5.800,8.300" fill="none" stroke="#3a3a3a" stroke-width="1.500"/></svg>
<span class="t" style="left:174.60px;top:211.78px;font-size:22px;line-height:22px;font-weight:400;color:#1c1c1c;letter-spacing:0.552px;">Browser</span>
<svg class="i" style="left:466.2px;top:207.6px;" width="24" height="24" viewBox="0 0 24 24"><rect x="2" y="2.600" width="19.500" height="18.700" rx="4.200" fill="#72706e" stroke="#3a3a3a" stroke-width="1.800"/><path d="M7.300,7.500 L16.300,16.400 M16.300,7.500 L7.300,16.400" stroke="#383838" stroke-width="3.200" stroke-linecap="round"/></svg>
<svg class="i" style="left:4px;top:255px;" width="32" height="32" viewBox="0 0 32 32"><rect x="3.100" y="2.100" width="21.700" height="21.900" fill="#ececea" stroke="#8b8b83" stroke-width="2"/><rect x="18.300" y="19.100" width="11.500" height="11.700" rx="2.400" fill="#4f8a4a"/><rect x="19.200" y="20" width="9.700" height="4.600" rx="1.500" fill="#6fa36a" opacity=".7"/><path d="M20.700,24.950 H27.400 M24.050,21.600 V28.300" stroke="#fff" stroke-width="2.600" stroke-linecap="round"/></svg>
<svg class="i" style="left:56px;top:255px;" width="32" height="32" viewBox="0 0 32 32"><g transform="translate(-0.500,-1.200) scale(0.685,0.668)"><defs><linearGradient id="grf2" x1="0" y1="0" x2="0" y2="1"><stop offset="0" stop-color="#7fb0e6"/><stop offset=".45" stop-color="#5b93d3"/><stop offset="1" stop-color="#3c77be"/></linearGradient><linearGradient id="grf2b" x1="0" y1="1" x2="0" y2="0"><stop offset="0" stop-color="#3f7ac2"/><stop offset=".5" stop-color="#5b93d3"/><stop offset="1" stop-color="#8ab6e8"/></linearGradient></defs><path d="M4.400,22 C3.600,10.500 13,2.300 24,2.200 C29.500,2.200 34.200,4.400 37.600,8.200 L43.600,2.800 V22.100 H27.600 L32.400,16 C30,12.800 27,11.200 23.600,11 C17,10.700 10,14.200 4.400,22z" fill="url(#grf2)" stroke="#3a72b8" stroke-width="1.100" stroke-linejoin="round"/><path d="M6,19 C8,10 15,4.600 24,4.400 C29,4.400 33,6 36.400,9.600" fill="none" stroke="#b7d3f2" stroke-width="1.200" opacity=".8"/><path transform="rotate(180 24 24.100)" d="M4.400,22 C3.600,10.500 13,2.300 24,2.200 C29.500,2.200 34.200,4.400 37.600,8.200 L43.600,2.800 V22.100 H27.600 L32.400,16 C30,12.800 27,11.200 23.600,11 C17,10.700 10,14.200 4.400,22z" fill="url(#grf2b)" stroke="#3a72b8" stroke-width="1.100" stroke-linejoin="round"/><path d="M36.800,29 C38,31.500 36,35.500 32.500,37.500 C37,36.500 41,32 41,27z" fill="#d9dde2" opacity=".8"/></g></svg>
<svg class="i" style="left:108px;top:254px;" width="32" height="32" viewBox="0 0 32 32"><path d="M4.200,1.900 H29 V7.600 L20,17.800 V30.600 L13.200,27.200 V17.800 L4.200,7.600z" fill="#6d9bcb" stroke="#34557e" stroke-width="1.600" stroke-linejoin="round"/><path d="M15.400,17.800 V27.500 L17.700,28.700 V17.800z" fill="#9dbde3"/><rect x="5.100" y="2.800" width="23" height="4.300" fill="#fce94f"/></svg>
<svg class="i" style="left:160.5px;top:254px;" width="32" height="32" viewBox="0 0 32 32"><path d="M1.800,5 H29.400 M4.400,5 V28 M4.400,13.200 H10 M4.400,25 H10" fill="none" stroke="#a6a6a6" stroke-width="2"/><path d="M21.650,1.100 L31.200,11.500 H25.500 V27.100 H17.800 V11.500 H12.100z" fill="#6d9bcb" stroke="#34557e" stroke-width="1.500" stroke-linejoin="round"/><rect x="9.500" y="10.200" width="5.900" height="5.900" fill="#f7941d"/><rect x="9.500" y="21.900" width="5.900" height="6.100" fill="#f7941d"/><rect x="11.500" y="12.200" width="1.900" height="1.900" fill="#f6e25a"/><rect x="11.500" y="24" width="1.900" height="1.900" fill="#f6e25a"/></svg>
<svg class="i" style="left:212px;top:254px;" width="32" height="32" viewBox="0 0 32 32"><defs><radialGradient id="gin" cx="35%" cy="25%" r="80%"><stop offset="0" stop-color="#8fb5e0"/><stop offset=".5" stop-color="#6d9bcb"/><stop offset="1" stop-color="#5f8ec4"/></radialGradient></defs><circle cx="15.950" cy="15.750" r="12.200" fill="url(#gin)" stroke="#3d6290" stroke-width="1.400"/><path d="M5.600,16.500 C5.200,10.500 9.600,5.600 15.800,5.200 C10.800,6.600 7.400,10.800 7.200,16.500z" fill="#fff" opacity=".3"/><text x="16.200" y="24.400" text-anchor="middle" font-family="Liberation Serif,serif" font-style="italic" font-weight="700" font-size="24.500" fill="#fff">i</text></svg>
<div id="btree" style="position:absolute;left:-4px;top:304px;width:496px;height:466.6px;box-sizing:border-box;border:2px solid #383838;border-radius:5px;background:#b3b3b3;box-shadow:0 0 0 0 #000"></div>
<div style="position:absolute;left:0;top:306px;width:472px;height:444px;overflow:hidden">
<svg class="i" style="left:5.6px;top:15.3px" width="12" height="10" viewBox="0 0 12 10"><path d="M0.8,0.8h10.4l-5.2,8.6z" fill="#6a6a6a"/></svg>
<svg class="i" style="left:34px;top:5.3px;" width="32" height="32" viewBox="0 0 32 32"><path d="M2.800,28.800 V4 H13 L17.600,8.800 H29.200 V28.800z" fill="#ececec" stroke="#8d8f86" stroke-width="1.900" stroke-linejoin="round"/><path d="M8,19.500 L16.200,11.500 L24.400,19.500 M10.600,18 V25.400 H21.800 V18" fill="none" stroke="#111" stroke-width="2.100" stroke-linejoin="miter"/></svg>
<span class="t" style="left:78.70px;top:6.59px;font-size:26px;line-height:26px;font-weight:400;color:#0a0a0a;letter-spacing:0.314px;">Home</span>
<svg class="i" style="left:39.1px;top:49.7px" width="10" height="12" viewBox="0 0 10 12"><path d="M0.8,0.8v10.4l8.6-5.2z" fill="#6a6a6a"/></svg>
<svg class="i" style="left:66px;top:41.3px;" width="32" height="32" viewBox="0 0 32 32"><path d="M2.800,28.300 V3.800 H13 L17.600,8.600 H29.200 V28.300z" fill="#ececec" stroke="#8d8f86" stroke-width="1.900" stroke-linejoin="round"/></svg>
<span class="t" style="left:110.20px;top:42.59px;font-size:26px;line-height:26px;font-weight:400;color:#0a0a0a;letter-spacing:0.514px;">anaconda3</span>
<svg class="i" style="left:39.1px;top:86.2px" width="10" height="12" viewBox="0 0 10 12"><path d="M0.8,0.8v10.4l8.6-5.2z" fill="#6a6a6a"/></svg>
<svg class="i" style="left:66px;top:77.8px;" width="32" height="32" viewBox="0 0 32 32"><path d="M2.800,28.300 V3.800 H13 L17.600,8.600 H29.200 V28.300z" fill="#ececec" stroke="#8d8f86" stroke-width="1.900" stroke-linejoin="round"/></svg>
<span class="t" style="left:110.20px;top:79.09px;font-size:26px;line-height:26px;font-weight:400;color:#0a0a0a;letter-spacing:0.754px;">Applications</span>
<svg class="i" style="left:39.1px;top:122.2px" width="10" height="12" viewBox="0 0 10 12"><path d="M0.8,0.8v10.4l8.6-5.2z" fill="#6a6a6a"/></svg>
<svg class="i" style="left:66px;top:113.8px;" width="32" height="32" viewBox="0 0 32 32"><path d="M2.800,28.300 V3.800 H13 L17.600,8.600 H29.200 V28.300z" fill="#ececec" stroke="#8d8f86" stroke-width="1.900" stroke-linejoin="round"/></svg>
<span class="t" style="left:110.20px;top:115.09px;font-size:26px;line-height:26px;font-weight:400;color:#0a0a0a;letter-spacing:0.818px;">Desktop</span>
<svg class="i" style="left:39.1px;top:158.2px" width="10" height="12" viewBox="0 0 10 12"><path d="M0.8,0.8v10.4l8.6-5.2z" fill="#6a6a6a"/></svg>
<svg class="i" style="left:66px;top:149.8px;" width="32" height="32" viewBox="0 0 32 32"><path d="M2.800,28.300 V3.800 H13 L17.600,8.600 H29.200 V28.300z" fill="#ececec" stroke="#8d8f86" stroke-width="1.900" stroke-linejoin="round"/></svg>
<span class="t" style="left:110.20px;top:151.09px;font-size:26px;line-height:26px;font-weight:400;color:#0a0a0a;letter-spacing:0.725px;">Documents</span>
<svg class="i" style="left:37.6px;top:195.8px" width="12" height="10" viewBox="0 0 12 10"><path d="M0.8,0.8h10.4l-5.2,8.6z" fill="#6a6a6a"/></svg>
<svg class="i" style="left:66px;top:185.8px;" width="32" height="32" viewBox="0 0 32 32"><path d="M2.600,2.600 H14 L17,5.500 H29.400 V9.500 H2.600z" fill="#9a9c92" stroke="#8d8f86" stroke-width="1"/><path d="M2.800,28.500 V9 H13 L17.600,13.600 H29.200 V28.500z" fill="#ececec" stroke="#8d8f86" stroke-width="1.900" stroke-linejoin="round"/></svg>
<span class="t" style="left:110.20px;top:187.09px;font-size:26px;line-height:26px;font-weight:400;color:#0a0a0a;letter-spacing:0.582px;">Downloads</span>
<svg class="i" style="left:69.6px;top:231.8px" width="12" height="10" viewBox="0 0 12 10"><path d="M0.8,0.8h10.4l-5.2,8.6z" fill="#6a6a6a"/></svg>
<svg class="i" style="left:98px;top:221.3px;" width="32" height="32" viewBox="0 0 32 32"><path d="M5.500,6.600 V21.200 C5.500,25.600 26.300,25.600 26.300,21.200 V6.600z" fill="#efefef" stroke="#8d8f86" stroke-width="1.800"/><ellipse cx="15.900" cy="6.600" rx="10.400" ry="3.200" fill="#f4f4f4" stroke="#8d8f86" stroke-width="1.800"/><path d="M5.500,13.600 C5.500,18 26.300,18 26.300,13.600" fill="none" stroke="#8d8f86" stroke-width="1.800"/></svg>
<span class="t" style="left:142.20px;top:223.09px;font-size:26px;line-height:26px;font-weight:400;color:#0a0a0a;letter-spacing:0.597px;">hex_grid_with_elevation.gpkg</span>
<div style="position:absolute;left:0px;top:254px;width:472px;height:36px;background:#efefef"></div>
<svg class="i" style="left:103.1px;top:266.2px" width="10" height="12" viewBox="0 0 10 12"><path d="M0.8,0.8v10.4l8.6-5.2z" fill="#6a6a6a"/></svg>
<svg class="i" style="left:130px;top:256.9px;" width="32" height="32" viewBox="0 0 32 32"><defs><linearGradient id="gpl" x1="0" y1="0" x2="0" y2="1"><stop offset="0" stop-color="#f6f6f6"/><stop offset="1" stop-color="#cfcfcf"/></linearGradient></defs><path d="M1.200,10 C1.200,3 8,1.800 13.500,4.800 C18.500,7.500 23,3.500 28,4 C32,4.500 32.800,10 31.800,14.800 C30.800,19.500 27,20.800 22,18.500 C18,16.600 14,18 10,22 C6,26 1.200,19.500 1.200,10z" fill="url(#gpl)" stroke="#8d8f86" stroke-width="1.700"/></svg>
<span class="t" style="left:174.20px;top:259.09px;font-size:26px;line-height:26px;font-weight:400;color:#0a0a0a;letter-spacing:0.706px;">hex_grid_with_elevation</span>
<svg class="i" style="left:98.9px;top:292.5px;" width="32" height="32" viewBox="0 0 32 32"><rect x="3" y="3" width="26" height="26" fill="#a9c8e8"/><path d="M3,3h8.700v8.700h-8.700z M20.300,3h8.700v8.700h-8.700z M11.700,11.700h8.600v8.600h-8.600z M3,20.300h8.700v8.700h-8.700z" fill="#263a55"/><path d="M20.300,20.300h8.700v8.700h-8.700z" fill="#b3b3b3"/><path d="M11.700,20.300h8.600v8.700h-8.600z" fill="#a9c8e8"/></svg>
<span class="t" style="left:142.20px;top:295.09px;font-size:26px;line-height:26px;font-weight:400;color:#0a0a0a;letter-spacing:0.280px;">output_SRTM15Plus.tif</span>
<svg class="i" style="left:71.1px;top:338.2px" width="10" height="12" viewBox="0 0 10 12"><path d="M0.8,0.8v10.4l8.6-5.2z" fill="#6a6a6a"/></svg>
<svg class="i" style="left:98.1px;top:327.8px;" width="32" height="32" viewBox="0 0 32 32"><rect x="3" y="3" width="26" height="25.800" fill="#efefef" stroke="#8d8f86" stroke-width="2"/><path d="M12.600,3 V15 M15.800,3 V15" stroke="#444" stroke-width="1.600" stroke-dasharray="1.600 1.600"/><path d="M14.200,4.600 V15" stroke="#444" stroke-width="1.600" stroke-dasharray="1.600 1.600"/><rect x="10.800" y="15.400" width="7" height="12.800" rx="3.400" fill="#e8e8e8" stroke="#555" stroke-width="1.700"/><ellipse cx="14.300" cy="19" rx="1.500" ry="1.700" fill="#fff" stroke="#555" stroke-width=".8"/><ellipse cx="14.300" cy="24.400" rx="1.500" ry="2.200" fill="#fff" stroke="#555" stroke-width=".8"/></svg>
<span class="t" style="left:142.20px;top:331.09px;font-size:26px;line-height:26px;font-weight:400;color:#0a0a0a;letter-spacing:0.170px;">rasters_SRTM15Plus.tar.gz</span>
<svg class="i" style="left:39.1px;top:374.2px" width="10" height="12" viewBox="0 0 10 12"><path d="M0.8,0.8v10.4l8.6-5.2z" fill="#6a6a6a"/></svg>
<svg class="i" style="left:66px;top:365.8px;" width="32" height="32" viewBox="0 0 32 32"><path d="M2.800,28.300 V3.800 H13 L17.600,8.600 H29.200 V28.300z" fill="#ececec" stroke="#8d8f86" stroke-width="1.900" stroke-linejoin="round"/><path d="M10,20 H22 M17.600,15.600 L22,20 L17.600,24.400" fill="none" stroke="#111" stroke-width="1.500"/></svg>
<span class="t" style="left:110.20px;top:367.09px;font-size:26px;line-height:26px;font-weight:400;color:#0a0a0a;letter-spacing:0.570px;">Google Drive</span>
<svg class="i" style="left:39.1px;top:410.2px" width="10" height="12" viewBox="0 0 10 12"><path d="M0.8,0.8v10.4l8.6-5.2z" fill="#6a6a6a"/></svg>
<svg class="i" style="left:66px;top:401.8px;" width="32" height="32" viewBox="0 0 32 32"><path d="M2.800,28.300 V3.800 H13 L17.600,8.600 H29.200 V28.300z" fill="#ececec" stroke="#8d8f86" stroke-width="1.900" stroke-linejoin="round"/></svg>
<span class="t" style="left:110.20px;top:403.09px;font-size:26px;line-height:26px;font-weight:400;color:#0a0a0a;letter-spacing:0.828px;">Movies</span>
<svg class="i" style="left:39.1px;top:446.2px" width="10" height="12" viewBox="0 0 10 12"><path d="M0.8,0.8v10.4l8.6-5.2z" fill="#6a6a6a"/></svg>
<svg class="i" style="left:66px;top:437.8px;" width="32" height="32" viewBox="0 0 32 32"><path d="M2.800,28.300 V3.800 H13 L17.600,8.600 H29.200 V28.300z" fill="#ececec" stroke="#8d8f86" stroke-width="1.900" stroke-linejoin="round"/></svg>
<span class="t" style="left:110.20px;top:439.09px;font-size:26px;line-height:26px;font-weight:400;color:#0a0a0a;letter-spacing:0.898px;">Music</span>
</div>
<div style="position:absolute;left:472.2px;top:307.5px;width:15.8px;height:442.4px;background:#383838;border-radius:5px"></div>
<div style="position:absolute;left:474px;top:348px;width:12px;height:146.5px;background:#737373;border-radius:3px"></div>
<div style="position:absolute;left:-6px;top:750.1px;width:478px;height:15.9px;background:#383838;border-radius:5px"></div>
<div style="position:absolute;left:-6px;top:752px;width:440px;height:12px;background:#737373;border-radius:3px"></div>
<span class="t" style="left:183.40px;top:791.58px;font-size:22px;line-height:22px;font-weight:400;color:#1c1c1c;letter-spacing:0.091px;">Layers</span>
<svg class="i" style="left:466.1px;top:788px;" width="24" height="24" viewBox="0 0 24 24"><rect x="2" y="2.600" width="19.500" height="18.700" rx="4.200" fill="#72706e" stroke="#3a3a3a" stroke-width="1.800"/><path d="M7.300,7.500 L16.300,16.400 M16.300,7.500 L7.300,16.400" stroke="#383838" stroke-width="3.200" stroke-linecap="round"/></svg>
<svg class="i" style="left:4px;top:834.5px;" width="32" height="32" viewBox="0 0 32 32"><path d="M1,22 L12.500,27.500 L16.500,24.500 L3.500,17z" fill="#d8322c"/><path d="M3.500,17 L16.500,24.500 L19,18.500 L5,11.500z" fill="#5b8fd0"/><path d="M5,11.500 L19,18.500 L21.500,14 L7.500,6.500z" fill="#f4dc3a"/><path d="M29.400,7 L22.200,16.600" stroke="#9a6a22" stroke-width="3.600" stroke-linecap="round"/><path d="M29.400,7 L22.200,16.600" stroke="#e0a044" stroke-width="2" stroke-linecap="round"/><path d="M9,20.500 L19,12.800 L24.500,17.500 L23.500,22.500 L16,29z" fill="#edc98e" stroke="#b9853c" stroke-width="1.100" stroke-linejoin="round"/><path d="M11.500,20.500 L17.500,26.500 M13.500,18.800 L19.500,24.800 M15.500,17.200 L21.500,23 M17.500,15.600 L23,20.800 M11,22.500 L20,14.500 M13,24.500 L22,16.300 M15,26.500 L23.500,18.500" stroke="#c9964a" stroke-width=".7" fill="none"/></svg>
<svg class="i" style="left:56px;top:834px;" width="32" height="32" viewBox="0 0 32 32"><path d="M2.400,19.600 V29.400 H14 M5.400,22.400 V26.600 H11" fill="none" stroke="#8c8c8c" stroke-width="1.400"/><rect x="11.200" y="5" width="16.400" height="16.800" fill="#e2e2e2" stroke="#8d8d8d" stroke-width="1.200"/><rect x="8.800" y="6.600" width="16.800" height="17" fill="#efefef" stroke="#8d8d8d" stroke-width="1.300"/><path d="M14.600,9.500 V18 a2.800,2.800 0 0 0 5.600,0 V3.800 a2.300,2.300 0 0 0 -4.600,0" fill="none" stroke="#2d5a94" stroke-width="1.900"/><rect x="18.600" y="20.300" width="11.800" height="11.400" rx="2.600" fill="#4f8a4a"/><rect x="19.500" y="21.200" width="10" height="4.500" rx="1.500" fill="#6fa36a" opacity=".7"/><path d="M21,26 H28 M24.500,22.600 V29.400" stroke="#fff" stroke-width="2.500" stroke-linecap="round"/></svg>
<svg class="i" style="left:108px;top:835px;" width="32" height="32" viewBox="0 0 32 32"><path d="M1.500,9.300 C8,3.600 23,3.400 30,9.100" fill="none" stroke="#9a9a9a" stroke-width="1.200"/><path d="M2.100,17.800 C7,9.600 24,8.800 31.300,19 C25,26.200 9,26.800 2.100,17.800z" fill="#f2f2f2" stroke="#8c8c86" stroke-width="1.200"/><circle cx="15.800" cy="15.300" r="6.900" fill="#6d9bcb" stroke="#3d6290" stroke-width="1.100"/><circle cx="15.800" cy="15.300" r="4.800" fill="#7fa8d6" opacity=".6"/><circle cx="15.800" cy="14.600" r="3.200" fill="#0a0a0a"/><circle cx="17.600" cy="13.200" r="1.300" fill="#fff"/></svg>
<svg class="i" style="left:160px;top:834px;" width="32" height="32" viewBox="0 0 32 32"><path d="M4.200,1.900 H29 V7.600 L20,17.800 V30.600 L13.200,27.200 V17.800 L4.200,7.600z" fill="#6d9bcb" stroke="#34557e" stroke-width="1.600" stroke-linejoin="round"/><path d="M15.400,17.800 V27.500 L17.700,28.700 V17.800z" fill="#9dbde3"/><rect x="5.100" y="2.800" width="23" height="4.300" fill="#fce94f"/></svg>
<svg class="i" style="left:213px;top:834px;" width="32" height="32" viewBox="0 0 32 32"><text x="2.200" y="20.600" font-family="Liberation Serif,serif" font-size="38" fill="#70358a" stroke="#70358a" stroke-width="0.25" textLength="14.500" lengthAdjust="spacingAndGlyphs">ε</text><rect x="16.200" y="24" width="14.300" height="8.200" rx="2" fill="#8f918a"/><path d="M16.800,18.600 H30 L26,24.600 V31.800 H21 V24.600z" fill="#fff"/></svg>
<svg class="i" style="left:288.5px;top:834px;" width="32" height="32" viewBox="0 0 32 32"><path d="M1.800,5 H29.400 M4.400,5 V28 M4.400,13.200 H10 M4.400,25 H10" fill="none" stroke="#a6a6a6" stroke-width="2"/><path d="M21.600,28.800 L31,18.700 H25.500 V2.400 H18 V18.700 H12.200z" fill="#6d9bcb" stroke="#34557e" stroke-width="1.500" stroke-linejoin="round"/><rect x="9.500" y="10.200" width="5.900" height="5.900" fill="#f7941d"/><rect x="9.500" y="21.900" width="5.900" height="6.100" fill="#f7941d"/><rect x="11.500" y="12.200" width="1.900" height="1.900" fill="#f6e25a"/><rect x="11.500" y="24" width="1.900" height="1.900" fill="#f6e25a"/></svg>
<svg class="i" style="left:340.5px;top:834px;" width="32" height="32" viewBox="0 0 32 32"><path d="M1.800,5 H29.400 M4.400,5 V28 M4.400,13.200 H10 M4.400,25 H10" fill="none" stroke="#a6a6a6" stroke-width="2"/><path d="M21.650,1.100 L31.200,11.500 H25.500 V27.100 H17.800 V11.500 H12.100z" fill="#6d9bcb" stroke="#34557e" stroke-width="1.500" stroke-linejoin="round"/><rect x="9.500" y="10.200" width="5.900" height="5.900" fill="#f7941d"/><rect x="9.500" y="21.900" width="5.900" height="6.100" fill="#f7941d"/><rect x="11.500" y="12.200" width="1.900" height="1.900" fill="#f6e25a"/><rect x="11.500" y="24" width="1.900" height="1.900" fill="#f6e25a"/></svg>
<svg class="i" style="left:392px;top:834px;" width="32" height="32" viewBox="0 0 32 32"><rect x="3.200" y="3.400" width="21.300" height="21.400" fill="#ececea" stroke="#8b8b83" stroke-width="2"/><rect x="18.100" y="20" width="11.700" height="9.700" rx="2.400" fill="#e8434e"/><path d="M20.600,24.900 H27.400" stroke="#fff" stroke-width="2.600" stroke-linecap="butt"/></svg>
<svg class="i" style="left:136.75px;top:857.25px" width="8.5" height="7.5" viewBox="0 0 10 9"><path d="M0.5,0.7h9l-4.5,7.8z" fill="#a8a8a8"/></svg>
<svg class="i" style="left:189.25px;top:857.25px" width="8.5" height="7.5" viewBox="0 0 10 9"><path d="M0.5,0.7h9l-4.5,7.8z" fill="#a8a8a8"/></svg>
<svg class="i" style="left:258.75px;top:847.75px" width="8.5" height="7.5" viewBox="0 0 10 9"><path d="M0.5,0.7h9l-4.5,7.8z" fill="#a8a8a8"/></svg>
<div id="ltree" style="position:absolute;left:-4px;top:882.5px;width:498px;height:371px;box-sizing:border-box;border:2px solid #383838;border-radius:5px;background:#b3b3b3"></div>
<div style="position:absolute;left:0px;top:884.5px;width:492px;height:45.5px;background:#efefef"></div>
<svg class="i" style="left:41px;top:895px" width="28" height="28" viewBox="0 0 28 28"><rect x="1.2" y="1.2" width="25.6" height="25.6" rx="6.5" fill="#b5b5b5" stroke="#3c3c3c" stroke-width="1.6"/><path d="M5.5,14.2 L11.2,21.2 L22.8,5.6" fill="none" stroke="#333" stroke-width="2.6" stroke-linecap="round" stroke-linejoin="round"/></svg>
<div style="position:absolute;left:82px;top:892px;width:32.2px;height:32px;box-sizing:border-box;background:#ff8000;border:1px solid #b8651a"></div>
<span class="t" style="left:127.00px;top:894.29px;font-size:26px;line-height:26px;font-weight:700;color:#0a0a0a;letter-spacing:0.728px;text-decoration:underline;text-decoration-thickness:2.4px;text-underline-offset:3.2px;-webkit-text-stroke:0.35px #0a0a0a;text-decoration-skip-ink:none;">hex_grid_with_elevation</span>
<div style="position:absolute;left:31.3px;top:868.3px;width:436.7px;height:75.5px;box-sizing:border-box;border:6.2px solid #ff2d6c;border-radius:5px"></div>
<div id="canvas" style="position:absolute;left:510px;top:208px;width:1338px;height:1042px;background:#fff;overflow:hidden">
<svg style="position:absolute;left:0;top:0" width="1338" height="1042" viewBox="510 208 1338 1042">
<defs><path id="hc" d="M0,10.78 l6.23,-10.78 h12.45 l6.23,10.78 l-6.23,10.78 h-12.45 zM0,32.35 l6.23,-10.78 h12.45 l6.23,10.78 l-6.23,10.78 h-12.45 zM0,53.92 l6.23,-10.78 h12.45 l6.23,10.78 l-6.23,10.78 h-12.45 zM0,75.48 l6.23,-10.78 h12.45 l6.23,10.78 l-6.23,10.78 h-12.45 zM0,97.05 l6.23,-10.78 h12.45 l6.23,10.78 l-6.23,10.78 h-12.45 zM0,118.62 l6.23,-10.78 h12.45 l6.23,10.78 l-6.23,10.78 h-12.45 zM0,140.19 l6.23,-10.78 h12.45 l6.23,10.78 l-6.23,10.78 h-12.45 zM0,161.75 l6.23,-10.78 h12.45 l6.23,10.78 l-6.23,10.78 h-12.45 zM0,183.32 l6.23,-10.78 h12.45 l6.23,10.78 l-6.23,10.78 h-12.45 zM0,204.89 l6.23,-10.78 h12.45 l6.23,10.78 l-6.23,10.78 h-12.45 zM0,226.45 l6.23,-10.78 h12.45 l6.23,10.78 l-6.23,10.78 h-12.45 zM0,248.02 l6.23,-10.78 h12.45 l6.23,10.78 l-6.23,10.78 h-12.45 zM0,269.59 l6.23,-10.78 h12.45 l6.23,10.78 l-6.23,10.78 h-12.45 zM0,291.15 l6.23,-10.78 h12.45 l6.23,10.78 l-6.23,10.78 h-12.45 zM0,312.72 l6.23,-10.78 h12.45 l6.23,10.78 l-6.23,10.78 h-12.45 zM0,334.29 l6.23,-10.78 h12.45 l6.23,10.78 l-6.23,10.78 h-12.45 zM0,355.86 l6.23,-10.78 h12.45 l6.23,10.78 l-6.23,10.78 h-12.45 zM0,377.42 l6.23,-10.78 h12.45 l6.23,10.78 l-6.23,10.78 h-12.45 zM0,398.99 l6.23,-10.78 h12.45 l6.23,10.78 l-6.23,10.78 h-12.45 zM0,420.56 l6.23,-10.78 h12.45 l6.23,10.78 l-6.23,10.78 h-12.45 zM0,442.12 l6.23,-10.78 h12.45 l6.23,10.78 l-6.23,10.78 h-12.45 zM0,463.69 l6.23,-10.78 h12.45 l6.23,10.78 l-6.23,10.78 h-12.45 zM0,485.26 l6.23,-10.78 h12.45 l6.23,10.78 l-6.23,10.78 h-12.45 zM0,506.82 l6.23,-10.78 h12.45 l6.23,10.78 l-6.23,10.78 h-12.45 zM0,528.39 l6.23,-10.78 h12.45 l6.23,10.78 l-6.23,10.78 h-12.45 zM0,549.96 l6.23,-10.78 h12.45 l6.23,10.78 l-6.23,10.78 h-12.45 zM0,571.53 l6.23,-10.78 h12.45 l6.23,10.78 l-6.23,10.78 h-12.45 zM0,593.09 l6.23,-10.78 h12.45 l6.23,10.78 l-6.23,10.78 h-12.45 zM0,614.66 l6.23,-10.78 h12.45 l6.23,10.78 l-6.23,10.78 h-12.45 zM0,636.23 l6.23,-10.78 h12.45 l6.23,10.78 l-6.23,10.78 h-12.45 zM0,657.79 l6.23,-10.78 h12.45 l6.23,10.78 l-6.23,10.78 h-12.45 zM0,679.36 l6.23,-10.78 h12.45 l6.23,10.78 l-6.23,10.78 h-12.45 zM0,700.93 l6.23,-10.78 h12.45 l6.23,10.78 l-6.23,10.78 h-12.45 zM0,722.49 l6.23,-10.78 h12.45 l6.23,10.78 l-6.23,10.78 h-12.45 zM0,744.06 l6.23,-10.78 h12.45 l6.23,10.78 l-6.23,10.78 h-12.45 zM0,765.63 l6.23,-10.78 h12.45 l6.23,10.78 l-6.23,10.78 h-12.45 zM0,787.2 l6.23,-10.78 h12.45 l6.23,10.78 l-6.23,10.78 h-12.45 zM0,808.76 l6.23,-10.78 h12.45 l6.23,10.78 l-6.23,10.78 h-12.45 zM0,830.33 l6.23,-10.78 h12.45 l6.23,10.78 l-6.23,10.78 h-12.45 zM0,851.9 l6.23,-10.78 h12.45 l6.23,10.78 l-6.23,10.78 h-12.45 zM0,873.46 l6.23,-10.78 h12.45 l6.23,10.78 l-6.23,10.78 h-12.45 z"/></defs>
<g fill="#ff8000" stroke="#1b222c" stroke-width="1.35" stroke-linejoin="round">
<use href="#hc" x="541.9" y="281.3"/>
<use href="#hc" x="560.58" y="292.08"/>
<use href="#hc" x="579.26" y="281.3"/>
<use href="#hc" x="597.93" y="292.08"/>
<use href="#hc" x="616.61" y="281.3"/>
<use href="#hc" x="635.29" y="292.08"/>
<use href="#hc" x="653.97" y="281.3"/>
<use href="#hc" x="672.64" y="292.08"/>
<use href="#hc" x="691.32" y="281.3"/>
<use href="#hc" x="710" y="292.08"/>
<use href="#hc" x="728.68" y="281.3"/>
<use href="#hc" x="747.35" y="292.08"/>
<use href="#hc" x="766.03" y="281.3"/>
<use href="#hc" x="784.71" y="292.08"/>
<use href="#hc" x="803.39" y="281.3"/>
<use href="#hc" x="822.06" y="292.08"/>
<use href="#hc" x="840.74" y="281.3"/>
<use href="#hc" x="859.42" y="292.08"/>
<use href="#hc" x="878.1" y="281.3"/>
<use href="#hc" x="896.77" y="292.08"/>
<use href="#hc" x="915.45" y="281.3"/>
<use href="#hc" x="934.13" y="292.08"/>
<use href="#hc" x="952.81" y="281.3"/>
<use href="#hc" x="971.48" y="292.08"/>
<use href="#hc" x="990.16" y="281.3"/>
<use href="#hc" x="1008.84" y="292.08"/>
<use href="#hc" x="1027.52" y="281.3"/>
<use href="#hc" x="1046.19" y="292.08"/>
<use href="#hc" x="1064.87" y="281.3"/>
<use href="#hc" x="1083.55" y="292.08"/>
<use href="#hc" x="1102.23" y="281.3"/>
<use href="#hc" x="1120.9" y="292.08"/>
<use href="#hc" x="1139.58" y="281.3"/>
<use href="#hc" x="1158.26" y="292.08"/>
<use href="#hc" x="1176.94" y="281.3"/>
<use href="#hc" x="1195.61" y="292.08"/>
<use href="#hc" x="1214.29" y="281.3"/>
<use href="#hc" x="1232.97" y="292.08"/>
<use href="#hc" x="1251.65" y="281.3"/>
<use href="#hc" x="1270.32" y="292.08"/>
<use href="#hc" x="1289" y="281.3"/>
<use href="#hc" x="1307.68" y="292.08"/>
<use href="#hc" x="1326.36" y="281.3"/>
<use href="#hc" x="1345.04" y="292.08"/>
<use href="#hc" x="1363.71" y="281.3"/>
<use href="#hc" x="1382.39" y="292.08"/>
<use href="#hc" x="1401.07" y="281.3"/>
<use href="#hc" x="1419.75" y="292.08"/>
<use href="#hc" x="1438.42" y="281.3"/>
<use href="#hc" x="1457.1" y="292.08"/>
<use href="#hc" x="1475.78" y="281.3"/>
<use href="#hc" x="1494.46" y="292.08"/>
<use href="#hc" x="1513.13" y="281.3"/>
<use href="#hc" x="1531.81" y="292.08"/>
<use href="#hc" x="1550.49" y="281.3"/>
<use href="#hc" x="1569.17" y="292.08"/>
<use href="#hc" x="1587.84" y="281.3"/>
<use href="#hc" x="1606.52" y="292.08"/>
<use href="#hc" x="1625.2" y="281.3"/>
<use href="#hc" x="1643.88" y="292.08"/>
<use href="#hc" x="1662.55" y="281.3"/>
<use href="#hc" x="1681.23" y="292.08"/>
<use href="#hc" x="1699.91" y="281.3"/>
<use href="#hc" x="1718.59" y="292.08"/>
<use href="#hc" x="1737.26" y="281.3"/>
<use href="#hc" x="1755.94" y="292.08"/>
<use href="#hc" x="1774.62" y="281.3"/>
<use href="#hc" x="1793.3" y="292.08"/>
</g></svg>
</div>
<div style="position:absolute;left:-2px;top:1260.5px;width:427.5px;height:46.5px;box-sizing:border-box;background:#b3b3b3;border:1.9px solid #363636;border-radius:6px;border-width:2px"></div>
<svg class="i" style="left:14px;top:1270px" width="28" height="28" viewBox="0 0 28 28"><circle cx="10.3" cy="9.8" r="7.3" fill="none" stroke="#9b9b9b" stroke-width="2"/><path d="M15.6,15.3 L24.6,24.8" stroke="#9b9b9b" stroke-width="2.6" stroke-linecap="round"/></svg>
<span class="t" style="left:61.30px;top:1272.49px;font-size:26px;line-height:26px;font-weight:400;color:#6c6c6c;letter-spacing:0.430px;">Type to locate (⌘K)</span>
<span class="t" style="left:447.00px;top:1274.48px;font-size:22px;line-height:22px;font-weight:400;color:#111;letter-spacing:1.750px;">To</span>
<div style="position:absolute;left:495px;top:1270px;width:5.5px;height:30px;overflow:hidden"><span class="t" style="left:-8px;top:3.5px;font-size:22px;line-height:22px;color:#111">o</span></div>
<div style="position:absolute;left:508.5px;top:1262.5px;width:190.5px;height:43px;box-sizing:border-box;background:#b3b3b3;border:1.9px solid #363636;border-radius:6px;"></div>
<span class="t" style="left:529.00px;top:1274.48px;font-size:22px;line-height:22px;font-weight:400;color:#141414;letter-spacing:1.549px;">5.53°,-43.98°</span>
<svg class="i" style="left:707.5px;top:1268px;" width="32" height="32" viewBox="0 0 32 32"><path d="M21.600,6.200 L29.600,2 M1.200,20.800 L5.400,17.600" stroke="#0a0a0a" stroke-width="1.700" stroke-dasharray="1.700 1.900"/><g transform="translate(17,16.400) rotate(-31)"><path d="M0,-16 C4.500,-16 6.600,-12.500 6.600,-8.500 C6.600,-4 8.800,0 8.800,6.500 C8.800,12 5,16 0,16 C-5,16 -8.800,12 -8.800,6.500 C-8.800,0 -6.600,-4 -6.600,-8.500 C-6.600,-12.500 -4.500,-16 0,-16z" fill="#cdbcbc"/></g><g transform="translate(14.400,15.400) rotate(-31)"><path d="M0,-16 C4.500,-16 6.600,-12.500 6.600,-8.500 C6.600,-4 8.800,0 8.800,6.500 C8.800,12 5,16 0,16 C-5,16 -8.800,12 -8.800,6.500 C-8.800,0 -6.600,-4 -6.600,-8.500 C-6.600,-12.500 -4.500,-16 0,-16z" fill="#fff" stroke="#000" stroke-width="1.800"/><path d="M-7.400,-3 C-4,1.800 4,1.800 7.400,-3" stroke="#000" stroke-width="2.400" fill="none"/><path d="M-7.800,1.500 C-4,4.600 4,4.600 7.800,1.500" stroke="#000" stroke-width="1.300" fill="none"/><path d="M-4.200,-14 C-6.200,-11 -6.200,-7 -5.600,-3.600" stroke="#000" stroke-width="2.800" fill="none"/><path d="M-0.200,-12.400 C0,-9 0.300,-7 0.500,-4.800" stroke="#2a1616" stroke-width="2.600" stroke-linecap="round" fill="none"/><circle cx="0" cy="9.200" r="2.700" fill="#fff" stroke="#000" stroke-width="1.700"/></g></svg>
<div style="position:absolute;left:769px;top:1270px;width:5.2px;height:30px;overflow:hidden"><span class="t" style="left:0.2px;top:4px;font-size:22px;line-height:22px;color:#111">a</span></div>
<div style="position:absolute;left:782.3px;top:1260.3px;width:172.9px;height:46.7px;box-sizing:border-box;background:#b3b3b3;border:1.9px solid #363636;border-radius:6px;border-width:2.3px;border-color:#2e2e2e;border-radius:7px"></div>
<div style="position:absolute;left:926.2px;top:1263.8px;width:25.6px;height:39.8px;background:linear-gradient(#454545,#383838);border-radius:0 4px 4px 0"></div>
<svg class="i" style="left:934.5px;top:1281px" width="10" height="9" viewBox="0 0 10 9"><path d="M0.5,0.5h9l-4.5,8z" fill="#cfcfcf"/></svg>
<span class="t" style="left:787.50px;top:1274.48px;font-size:22px;line-height:22px;font-weight:400;color:#141414;letter-spacing:1.457px;">l:23485424</span>
<svg class="i" style="left:978px;top:1268px" width="28" height="34" viewBox="0 0 28 34"><path d="M7.2,19 V11.6 a6.9,6.9 0 0 1 13.8,0 V19" fill="none" stroke="#efefef" stroke-width="2.6"/><rect x="2" y="17" width="24" height="14.8" rx="2.5" fill="#6c6c6c"/></svg>
<div style="position:absolute;left:1024.5px;top:1270px;width:7px;height:30px;overflow:hidden"><span class="t" style="left:0px;top:3.5px;font-size:22px;line-height:22px;color:#111">r</span></div>
<div style="position:absolute;left:1038.5px;top:1265px;width:175px;height:38.5px;box-sizing:border-box;background:#b3b3b3;border:1.9px solid #363636;border-radius:6px;"></div>
<span class="t" style="left:1045.00px;top:1274.48px;font-size:22px;line-height:22px;font-weight:400;color:#141414;letter-spacing:0.073px;">100%</span>
<div style="position:absolute;left:1184px;top:1268px;width:26px;height:32px;background:linear-gradient(#3e3e3e,#343434);border-radius:5px"></div><svg class="i" style="left:1184px;top:1268px" width="26" height="32" viewBox="0 0 26 32"><path d="M13,6.2 L17.2,13.4 H8.8z M13,25.8 L17.2,18.6 H8.8z" fill="#c9c9c9"/></svg>
<div style="position:absolute;left:1231.5px;top:1270px;width:6.5px;height:30px;overflow:hidden"><span class="t" style="left:-6px;top:3.5px;font-size:22px;line-height:22px;color:#111">a</span></div>
<div style="position:absolute;left:1258.5px;top:1265px;width:175px;height:38.5px;box-sizing:border-box;background:#b3b3b3;border:1.9px solid #363636;border-radius:6px;"></div>
<span class="t" style="left:1270.50px;top:1274.48px;font-size:22px;line-height:22px;font-weight:400;color:#141414;letter-spacing:1.375px;">0.0 °</span>
<div style="position:absolute;left:1404px;top:1268px;width:26px;height:32px;background:linear-gradient(#3e3e3e,#343434);border-radius:5px"></div><svg class="i" style="left:1404px;top:1268px" width="26" height="32" viewBox="0 0 26 32"><path d="M13,6.2 L17.2,13.4 H8.8z M13,25.8 L17.2,18.6 H8.8z" fill="#c9c9c9"/></svg>
<svg class="i" style="left:1447px;top:1271px" width="28" height="28" viewBox="0 0 28 28"><rect x="1.2" y="1.2" width="25.6" height="25.6" rx="6" fill="#bcbcbc" stroke="#3c3c3c" stroke-width="1.6"/><path d="M5.5,14.2 L11.2,21.2 L22.8,5.6" fill="none" stroke="#2e2e2e" stroke-width="2.5" stroke-linecap="round" stroke-linejoin="round"/></svg>
<span class="t" style="left:1489.00px;top:1274.78px;font-size:22px;line-height:22px;font-weight:400;color:#111;letter-spacing:0.069px;">Render</span>
<svg class="i" style="left:1588px;top:1268px;" width="32" height="32" viewBox="0 0 32 32"><path d="M10.800,4.100 H21.500 L31.900,15.800 C31.900,17 30,17.400 28.600,17.400 C28,24 23,29.200 15.800,29.200 C9,29.200 3.600,24 3.100,17.400 C1.500,17.400 0.400,17 0.400,15.800z" fill="#e6e6e6" stroke="#6c6c6c" stroke-width="1"/><g stroke="#6a6a6a" fill="none" stroke-width="1.500"><path d="M7.800,7.600 Q15.800,8.800 24.400,7.600 M4.200,11.900 Q15.800,13.800 28,11.900"/><path d="M0.800,15.900 Q15.800,19.200 31.500,15.900" stroke-width="2"/><path d="M15.800,4.100 V29 M12.500,4.100 L8.900,16.800 M18.800,4.100 L22.900,16.800"/><path d="M10.600,17.600 C11,23 13,27 15.400,29 M21,17.600 C20.600,23 18.600,27 16.200,29 M4.600,22.900 Q15.800,25.200 27,22.900"/></g></svg>
<span class="t" style="left:1625.50px;top:1274.78px;font-size:22px;line-height:22px;font-weight:400;color:#111;letter-spacing:0.227px;">EPSG:4326</span>
<svg class="i" style="left:1789px;top:1267.5px;" width="34" height="34" viewBox="0 0 34 34"><path d="M17,2 C26,2 32.500,7.500 32.500,14.500 C32.500,19 30,22.500 26.500,24.600 C27.500,27.500 29.500,29.600 32,31 C27.500,31.600 23.500,30 20.500,26.700 C19.400,26.900 18.200,27 17,27 C8,27 1.500,21.500 1.500,14.500 C1.500,7.500 8,2 17,2z" fill="#696969"/><circle cx="9.600" cy="14.500" r="2.500" fill="#fff"/><circle cx="17" cy="14.500" r="2.500" fill="#fff"/><circle cx="24.400" cy="14.500" r="2.500" fill="#fff"/></svg>
<div style="position:absolute;right:0;bottom:0;width:10px;height:10px;background:radial-gradient(circle at 0 0,rgba(90,20,8,0) 9.7px,#5a1408 10.5px)"></div>
</div>
</body></html>
